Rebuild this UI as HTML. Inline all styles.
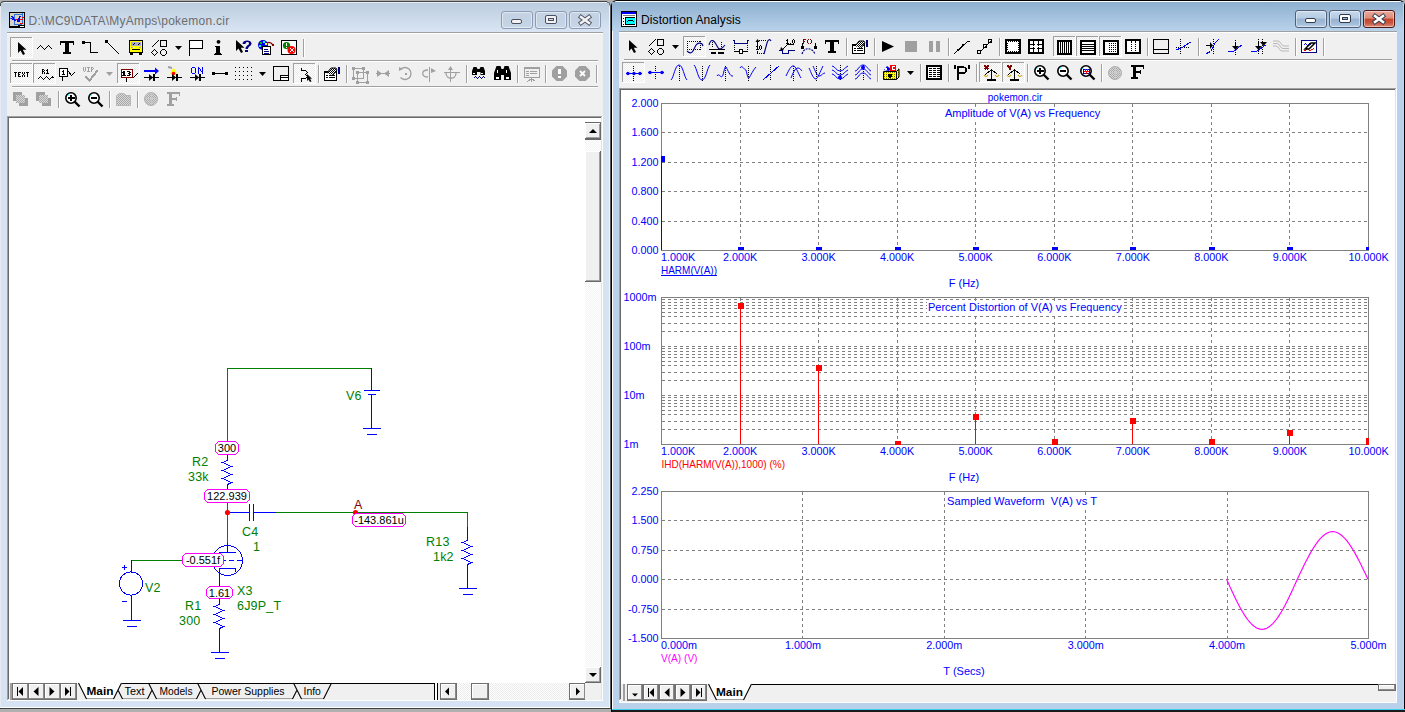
<!DOCTYPE html><html><head><meta charset="utf-8"><style>
html,body{margin:0;padding:0;}
body{width:1405px;height:712px;overflow:hidden;position:relative;background:#b0b0b0;font-family:"Liberation Sans",sans-serif;}
div{box-sizing:border-box;}
svg{position:absolute;overflow:visible;}
.t{position:absolute;white-space:pre;line-height:1;}
</style></head><body>

<div style="position:absolute;left:0px;top:1px;width:611px;height:708px;background:#d6e3f2;border-radius:5px 6px 0 0;"></div>
<div style="position:absolute;left:3px;top:1px;width:604px;height:1px;background:#474747;"></div>
<div style="position:absolute;left:0px;top:6px;width:1px;height:703px;background:#e8ecf2;"></div>
<svg style="left:0;top:0" width="8" height="8"><path d="M0.5 6 Q0.5 1.5 4 1.5" fill="none" stroke="#474747" stroke-width="1.2"/></svg>
<div style="position:absolute;left:605px;top:1px;width:6px;height:6px;background:transparent;border-top:1px solid #474747;border-right:1px solid #474747;border-radius:0 6px 0 0;box-sizing:border-box"></div>
<div style="position:absolute;left:4px;top:2px;width:603px;height:1px;background:#e6edf6;"></div>
<div style="position:absolute;left:1px;top:3px;width:608px;height:29px;background:linear-gradient(#bccddf,#d9e5f3);"></div>
<div style="position:absolute;left:609px;top:6px;width:1px;height:702px;background:#eef3fb;"></div>
<div style="position:absolute;left:610px;top:6px;width:1px;height:703px;background:#5a5a5a;"></div>
<div style="position:absolute;left:1px;top:707px;width:609px;height:1px;background:#fff;"></div>
<div style="position:absolute;left:0px;top:708px;width:611px;height:1px;background:#404040;"></div>
<div class="t" style="left:28.5px;top:14.5px;font-size:12px;color:#6d6d6d;letter-spacing:0.27px">D:\MC9\DATA\MyAmps\pokemon.cir</div>
<svg style="left:9px;top:12px" width="16" height="16" shape-rendering="crispEdges"><rect width="16" height="16" fill="#000"/><rect x="1" y="1" width="14" height="12" fill="#d8d2c0"/><rect x="1" y="13" width="8" height="1" fill="#d8d2c0"/><path d="M5.5 2 V12 M1 6.5 H5 M5 12.5 H13 M13.5 12 V1 M5.5 2.5 H13" stroke="#3070e0" stroke-width="1.2" fill="none"/><path d="M3 4 L6 9 M2 6 L4 8 M11 4 L9 10 M8 8 L11 9" stroke="#0000ff" stroke-width="1.4" fill="none"/><rect x="6" y="7" width="2" height="1" fill="#ff0000"/><rect x="13" y="5" width="2" height="1" fill="#ff0000"/><rect x="11" y="7" width="3" height="1" fill="#ff0000"/><rect x="11" y="11" width="3" height="1" fill="#ff0000"/><rect x="11" y="14" width="4" height="1" fill="#fff"/></svg>
<div style="position:absolute;left:501px;top:11px;width:32px;height:18px;border:1px solid #8b9ab7;border-radius:3px;background:linear-gradient(#c5d3e3 0%,#c3d2e3 50%,#c8d7e8 100%);box-shadow:inset 0 0 0 1px rgba(255,255,255,0.45)"></div><div style="position:absolute;left:511px;top:19px;width:11px;height:5px;background:#f2f2f2;border:1px solid #4a5060;border-radius:2px"></div>
<div style="position:absolute;left:535px;top:11px;width:32px;height:18px;border:1px solid #8b9ab7;border-radius:3px;background:linear-gradient(#c5d3e3 0%,#c3d2e3 50%,#c8d7e8 100%);box-shadow:inset 0 0 0 1px rgba(255,255,255,0.45)"></div><div style="position:absolute;left:545px;top:15px;width:12px;height:9px;background:#f2f2f2;border:1px solid #4a5060;border-radius:2px"><div style="position:absolute;left:2px;top:2px;width:6px;height:3px;border:1px solid #4a5060;background:#c8d6e6"></div></div>
<div style="position:absolute;left:569px;top:11px;width:32px;height:18px;border:1px solid #8b9ab7;border-radius:3px;background:linear-gradient(#c5d3e3 0%,#c3d2e3 50%,#c8d7e8 100%);box-shadow:inset 0 0 0 1px rgba(255,255,255,0.45)"></div><svg style="left:569px;top:11px" width="32" height="18"><path d="M12.0 6.0 L20.0 12.0 M20.0 6.0 L12.0 12.0" stroke="#4a5060" stroke-width="4.4" stroke-linecap="square"/><path d="M12.0 6.0 L20.0 12.0 M20.0 6.0 L12.0 12.0" stroke="#f2f2f2" stroke-width="2.6" stroke-linecap="square"/></svg>
<div style="position:absolute;left:7px;top:32px;width:596px;height:669px;background:#f0f0f0;"></div>
<div style="position:absolute;left:7px;top:32px;width:596px;height:1px;background:#a0a0a0;"></div>
<div style="position:absolute;left:7px;top:33px;width:596px;height:1px;background:#fff;"></div>
<div style="position:absolute;left:7px;top:700px;width:596px;height:1px;background:#fff;"></div>
<div style="position:absolute;left:12px;top:60px;width:586px;height:1px;background:#a0a0a0;"></div>
<div style="position:absolute;left:12px;top:61px;width:586px;height:1px;background:#fff;"></div>
<div style="position:absolute;left:12px;top:86px;width:586px;height:1px;background:#a0a0a0;"></div>
<div style="position:absolute;left:12px;top:87px;width:586px;height:1px;background:#fff;"></div>
<div style="position:absolute;left:7px;top:116px;width:596px;height:585px;background:#fff;"></div><div style="position:absolute;left:7px;top:116px;width:595px;height:1px;background:#a0a0a0;"></div><div style="position:absolute;left:7px;top:116px;width:1px;height:584px;background:#a0a0a0;"></div><div style="position:absolute;left:8px;top:117px;width:593px;height:1px;background:#696969;"></div><div style="position:absolute;left:8px;top:117px;width:1px;height:582px;background:#696969;"></div><div style="position:absolute;left:8px;top:699px;width:594px;height:1px;background:#e3e3e3;"></div><div style="position:absolute;left:601px;top:117px;width:1px;height:583px;background:#e3e3e3;"></div><div style="position:absolute;left:7px;top:700px;width:596px;height:1px;background:#fff;"></div><div style="position:absolute;left:602px;top:116px;width:1px;height:585px;background:#fff;"></div>
<div style="position:absolute;left:585px;top:122px;width:16px;height:561px;background-color:#f4f4f4;background-image:linear-gradient(45deg,#fff 25%,transparent 25%,transparent 75%,#fff 75%),linear-gradient(45deg,#fff 25%,transparent 25%,transparent 75%,#fff 75%);background-size:2px 2px;background-position:0 0,1px 1px"></div>
<div style="position:absolute;left:585px;top:122px;width:16px;height:1px;background:#696969;"></div>
<div style="position:absolute;left:585px;top:123px;width:16px;height:16px;background:#f0f0f0;"></div><div style="position:absolute;left:585px;top:123px;width:16px;height:1px;background:#fff;"></div><div style="position:absolute;left:585px;top:123px;width:1px;height:16px;background:#fff;"></div><div style="position:absolute;left:586px;top:137px;width:14px;height:1px;background:#a0a0a0;"></div><div style="position:absolute;left:599px;top:124px;width:1px;height:14px;background:#a0a0a0;"></div><div style="position:absolute;left:585px;top:138px;width:16px;height:1px;background:#696969;"></div><div style="position:absolute;left:600px;top:123px;width:1px;height:16px;background:#696969;"></div>
<svg style="left:585px;top:123px" width="16" height="16"><path d="M4 10 L12 10 L8 6 Z" fill="#000"/></svg>
<div style="position:absolute;left:585px;top:139px;width:16px;height:1px;background:#696969;"></div>
<div style="position:absolute;left:585px;top:151px;width:16px;height:131px;background:#f0f0f0;"></div><div style="position:absolute;left:585px;top:151px;width:16px;height:1px;background:#fff;"></div><div style="position:absolute;left:585px;top:151px;width:1px;height:131px;background:#fff;"></div><div style="position:absolute;left:586px;top:280px;width:14px;height:1px;background:#a0a0a0;"></div><div style="position:absolute;left:599px;top:152px;width:1px;height:129px;background:#a0a0a0;"></div><div style="position:absolute;left:585px;top:281px;width:16px;height:1px;background:#696969;"></div><div style="position:absolute;left:600px;top:151px;width:1px;height:131px;background:#696969;"></div>
<div style="position:absolute;left:585px;top:667px;width:16px;height:16px;background:#f0f0f0;"></div><div style="position:absolute;left:585px;top:667px;width:16px;height:1px;background:#fff;"></div><div style="position:absolute;left:585px;top:667px;width:1px;height:16px;background:#fff;"></div><div style="position:absolute;left:586px;top:681px;width:14px;height:1px;background:#a0a0a0;"></div><div style="position:absolute;left:599px;top:668px;width:1px;height:14px;background:#a0a0a0;"></div><div style="position:absolute;left:585px;top:682px;width:16px;height:1px;background:#696969;"></div><div style="position:absolute;left:600px;top:667px;width:1px;height:16px;background:#696969;"></div>
<svg style="left:585px;top:667px" width="16" height="16"><path d="M4 6 L12 6 L8 10 Z" fill="#000"/></svg>
<div style="position:absolute;left:611px;top:0px;width:794px;height:712px;background:#b9d1ea;border-radius:6px 6px 0 0;border:1px solid #000;border-bottom:none;box-shadow:inset 1px 1px 0 #fff, inset -1px 0 0 #d8e8f8"></div>
<div style="position:absolute;left:612px;top:2px;width:792px;height:29px;background:linear-gradient(#8eafcf,#b9d3eb);"></div>
<div style="position:absolute;left:1403px;top:4px;width:1px;height:705px;background:#a8e2f4;"></div>
<div style="position:absolute;left:612px;top:709px;width:793px;height:1px;background:#3cd0ec;"></div>
<div style="position:absolute;left:611px;top:710px;width:794px;height:2px;background:#1a1a1a;"></div>
<div style="position:absolute;left:611px;top:700px;width:1px;height:12px;background:#000;"></div>
<div class="t" style="left:641px;top:14.3px;font-size:12px;color:#000;letter-spacing:0.1px">Distortion Analysis</div>
<svg style="left:621px;top:11px" width="16" height="16" shape-rendering="crispEdges"><rect width="16" height="16" fill="#000"/><rect x="1" y="1" width="14" height="14" fill="#fff"/><rect x="1" y="1" width="14" height="2" fill="#0000ff"/><rect x="2" y="4" width="12" height="1" fill="#808080"/><rect x="4" y="6" width="10" height="8" fill="#000"/><rect x="5" y="7" width="9" height="6" fill="#00ffff"/><path d="M5.5 11.5 L8 9 H11 L13.5 11.5" stroke="#000" fill="none"/><rect x="2" y="7" width="1" height="1" fill="#000"/><rect x="2" y="10" width="1" height="1" fill="#000"/><rect x="2" y="13" width="1" height="1" fill="#000"/></svg>
<div style="position:absolute;left:1295px;top:10px;width:32px;height:18px;border:1px solid #4f5f78;border-radius:3px;background:linear-gradient(#c7d9ec 0%,#b4cbe3 45%,#98b3d1 50%,#a0bad6 75%,#b9d0e7 100%);box-shadow:inset 0 0 0 1px rgba(255,255,255,0.45)"></div><div style="position:absolute;left:1305px;top:18px;width:11px;height:5px;background:#fff;border:1px solid #2e3a4e;border-radius:2px"></div>
<div style="position:absolute;left:1329px;top:10px;width:32px;height:18px;border:1px solid #4f5f78;border-radius:3px;background:linear-gradient(#c7d9ec 0%,#b4cbe3 45%,#98b3d1 50%,#a0bad6 75%,#b9d0e7 100%);box-shadow:inset 0 0 0 1px rgba(255,255,255,0.45)"></div><div style="position:absolute;left:1339px;top:14px;width:12px;height:9px;background:#fff;border:1px solid #2e3a4e;border-radius:2px"><div style="position:absolute;left:2px;top:2px;width:6px;height:3px;border:1px solid #2e3a4e;background:#9ab4d0"></div></div>
<div style="position:absolute;left:1363px;top:10px;width:32px;height:18px;border:1px solid #4e1714;border-radius:3px;background:linear-gradient(#e9a99b 0%,#dd8b7a 45%,#c4452b 50%,#c8563f 75%,#dc8d7b 100%);box-shadow:inset 0 0 0 1px rgba(255,255,255,0.45)"></div><svg style="left:1363px;top:10px" width="32" height="18"><path d="M12.0 6.0 L20.0 12.0 M20.0 6.0 L12.0 12.0" stroke="#2e3a4e" stroke-width="4.4" stroke-linecap="square"/><path d="M12.0 6.0 L20.0 12.0 M20.0 6.0 L12.0 12.0" stroke="#fff" stroke-width="2.6" stroke-linecap="square"/></svg>
<div style="position:absolute;left:619px;top:31px;width:778px;height:672px;background:#f0f0f0;"></div>
<div style="position:absolute;left:619px;top:31px;width:778px;height:1px;background:#a0a0a0;"></div>
<div style="position:absolute;left:619px;top:32px;width:778px;height:1px;background:#fff;"></div>
<div style="position:absolute;left:619px;top:702px;width:778px;height:1px;background:#fff;"></div>
<div style="position:absolute;left:624px;top:59px;width:768px;height:1px;background:#a0a0a0;"></div>
<div style="position:absolute;left:624px;top:60px;width:768px;height:1px;background:#fff;"></div>
<div style="position:absolute;left:619px;top:88px;width:778px;height:613px;background:#fff;"></div><div style="position:absolute;left:619px;top:88px;width:777px;height:1px;background:#a0a0a0;"></div><div style="position:absolute;left:619px;top:88px;width:1px;height:612px;background:#a0a0a0;"></div><div style="position:absolute;left:620px;top:89px;width:775px;height:1px;background:#696969;"></div><div style="position:absolute;left:620px;top:89px;width:1px;height:610px;background:#696969;"></div><div style="position:absolute;left:620px;top:699px;width:776px;height:1px;background:#e3e3e3;"></div><div style="position:absolute;left:1395px;top:89px;width:1px;height:611px;background:#e3e3e3;"></div><div style="position:absolute;left:619px;top:700px;width:778px;height:1px;background:#fff;"></div><div style="position:absolute;left:1396px;top:88px;width:1px;height:613px;background:#fff;"></div>
<div style="position:absolute;left:621px;top:684px;width:775px;height:17px;background:#f0f0f0;"></div>
<svg style="left:0;top:0" width="1405" height="712" font-family="Liberation Sans, sans-serif">
<rect x="9" y="683" width="576" height="17" fill="#f0f0f0"/>
<rect x="12" y="683" width="17" height="17" fill="#f0f0f0" shape-rendering="crispEdges"/><rect x="12.5" y="683.5" width="16" height="16" fill="none" stroke="#707070" shape-rendering="crispEdges"/><path d="M13.5 698 V684.5 H27" stroke="#fff" fill="none" shape-rendering="crispEdges"/><path d="M13 698.5 H27.5 V684" stroke="#8a8a8a" fill="none" shape-rendering="crispEdges"/>
<rect x="17" y="687.0" width="1" height="9" fill="#000"/><path d="M23 687.0 V696.0 L18.5 691.5 Z" fill="#000"/>
<rect x="28" y="683" width="17" height="17" fill="#f0f0f0" shape-rendering="crispEdges"/><rect x="28.5" y="683.5" width="16" height="16" fill="none" stroke="#707070" shape-rendering="crispEdges"/><path d="M29.5 698 V684.5 H43" stroke="#fff" fill="none" shape-rendering="crispEdges"/><path d="M29 698.5 H43.5 V684" stroke="#8a8a8a" fill="none" shape-rendering="crispEdges"/>
<path d="M38.5 687.0 V696.0 L33.5 691.5 Z" fill="#000"/>
<rect x="44" y="683" width="17" height="17" fill="#f0f0f0" shape-rendering="crispEdges"/><rect x="44.5" y="683.5" width="16" height="16" fill="none" stroke="#707070" shape-rendering="crispEdges"/><path d="M45.5 698 V684.5 H59" stroke="#fff" fill="none" shape-rendering="crispEdges"/><path d="M45 698.5 H59.5 V684" stroke="#8a8a8a" fill="none" shape-rendering="crispEdges"/>
<path d="M49.5 687.0 V696.0 L54.5 691.5 Z" fill="#000"/>
<rect x="60" y="683" width="17" height="17" fill="#f0f0f0" shape-rendering="crispEdges"/><rect x="60.5" y="683.5" width="16" height="16" fill="none" stroke="#707070" shape-rendering="crispEdges"/><path d="M61.5 698 V684.5 H75" stroke="#fff" fill="none" shape-rendering="crispEdges"/><path d="M61 698.5 H75.5 V684" stroke="#8a8a8a" fill="none" shape-rendering="crispEdges"/>
<rect x="70" y="687.0" width="1" height="9" fill="#000"/><path d="M65 687.0 V696.0 L69.5 691.5 Z" fill="#000"/>
<rect x="10" y="683" width="2" height="17" fill="#a0a0a0"/>
<path d="M114 683 L122 699 H148 L156 683 Z" fill="#f0f0f0"/>
<rect x="122" y="698" width="26" height="1" fill="#a0a0a0" shape-rendering="crispEdges"/>
<path d="M114.5 683 L122.5 699 M147.5 699 L155.5 683" fill="none" stroke="#000" stroke-width="1.1"/>
<path d="M148 683 L156 699 H197 L205 683 Z" fill="#f0f0f0"/>
<rect x="156" y="698" width="41" height="1" fill="#a0a0a0" shape-rendering="crispEdges"/>
<path d="M148.5 683 L156.5 699 M196.5 699 L204.5 683" fill="none" stroke="#000" stroke-width="1.1"/>
<path d="M197 683 L205 699 H293 L301 683 Z" fill="#f0f0f0"/>
<rect x="205" y="698" width="88" height="1" fill="#a0a0a0" shape-rendering="crispEdges"/>
<path d="M197.5 683 L205.5 699 M292.5 699 L300.5 683" fill="none" stroke="#000" stroke-width="1.1"/>
<path d="M293 683 L301 699 H324 L332 683 Z" fill="#f0f0f0"/>
<rect x="301" y="698" width="23" height="1" fill="#a0a0a0" shape-rendering="crispEdges"/>
<path d="M293.5 683 L301.5 699 M323.5 699 L331.5 683" fill="none" stroke="#000" stroke-width="1.1"/>
<rect x="122" y="683" width="314" height="1" fill="#000" shape-rendering="crispEdges"/>
<path d="M78 683 L86 699 H114 L122 683 Z" fill="#fff"/>
<rect x="86" y="698" width="28" height="1" fill="#a0a0a0" shape-rendering="crispEdges"/>
<path d="M78.5 683 L86.5 699 M113.5 699 L121.5 683" fill="none" stroke="#000" stroke-width="1.1"/>
<text x="86.5" y="694.5" font-size="11.5" font-weight="bold" fill="#000" textLength="27" lengthAdjust="spacingAndGlyphs">Main</text>
<text x="124.5" y="694.5" font-size="11.5" fill="#000" textLength="20" lengthAdjust="spacingAndGlyphs">Text</text>
<text x="159.5" y="694.5" font-size="11.5" fill="#000" textLength="33" lengthAdjust="spacingAndGlyphs">Models</text>
<text x="211.5" y="694.5" font-size="11.5" fill="#000" textLength="73" lengthAdjust="spacingAndGlyphs">Power Supplies</text>
<text x="303.5" y="694.5" font-size="11.5" fill="#000" textLength="17.4" lengthAdjust="spacingAndGlyphs">Info</text>
<rect x="434" y="683" width="1" height="17" fill="#000"/><rect x="435" y="683" width="2" height="17" fill="#fff"/><rect x="437" y="683" width="1" height="17" fill="#000"/>
<rect x="440" y="683" width="145" height="17" fill="url(#chk)"/>
<rect x="440" y="683" width="17" height="17" fill="#f0f0f0" shape-rendering="crispEdges"/><rect x="440.5" y="683.5" width="16" height="16" fill="none" stroke="#707070" shape-rendering="crispEdges"/><path d="M441.5 698 V684.5 H455" stroke="#fff" fill="none" shape-rendering="crispEdges"/><path d="M441 698.5 H455.5 V684" stroke="#8a8a8a" fill="none" shape-rendering="crispEdges"/>
<path d="M449 687.5 V695.5 L445 691.5 Z" fill="#000"/>
<rect x="471" y="683" width="18" height="17" fill="#f0f0f0" shape-rendering="crispEdges"/><rect x="471.5" y="683.5" width="17" height="16" fill="none" stroke="#707070" shape-rendering="crispEdges"/><path d="M472.5 698 V684.5 H487" stroke="#fff" fill="none" shape-rendering="crispEdges"/><path d="M472 698.5 H487.5 V684" stroke="#8a8a8a" fill="none" shape-rendering="crispEdges"/>
<rect x="569" y="683" width="17" height="17" fill="#f0f0f0" shape-rendering="crispEdges"/><rect x="569.5" y="683.5" width="16" height="16" fill="none" stroke="#707070" shape-rendering="crispEdges"/><path d="M570.5 698 V684.5 H584" stroke="#fff" fill="none" shape-rendering="crispEdges"/><path d="M570 698.5 H584.5 V684" stroke="#8a8a8a" fill="none" shape-rendering="crispEdges"/>
<path d="M576 687.5 V695.5 L580 691.5 Z" fill="#000"/>
<rect x="585" y="683" width="16" height="17" fill="#f0f0f0"/>
<rect x="621" y="684" width="775" height="17" fill="#f0f0f0"/>
<rect x="623" y="684" width="2" height="17" fill="#a0a0a0"/>
<rect x="627" y="684" width="16" height="17" fill="#f0f0f0" shape-rendering="crispEdges"/><rect x="627.5" y="684.5" width="15" height="16" fill="none" stroke="#707070" shape-rendering="crispEdges"/><path d="M628.5 699 V685.5 H641" stroke="#fff" fill="none" shape-rendering="crispEdges"/><path d="M628 699.5 H641.5 V685" stroke="#8a8a8a" fill="none" shape-rendering="crispEdges"/>
<path d="M632 693.5 H638 L635 696.5 Z" fill="#000"/>
<rect x="643" y="684" width="16" height="17" fill="#f0f0f0" shape-rendering="crispEdges"/><rect x="643.5" y="684.5" width="15" height="16" fill="none" stroke="#707070" shape-rendering="crispEdges"/><path d="M644.5 699 V685.5 H657" stroke="#fff" fill="none" shape-rendering="crispEdges"/><path d="M644 699.5 H657.5 V685" stroke="#8a8a8a" fill="none" shape-rendering="crispEdges"/>
<rect x="648" y="688.0" width="1" height="9" fill="#000"/><path d="M654 688.0 V697.0 L649.5 692.5 Z" fill="#000"/>
<rect x="659" y="684" width="16" height="17" fill="#f0f0f0" shape-rendering="crispEdges"/><rect x="659.5" y="684.5" width="15" height="16" fill="none" stroke="#707070" shape-rendering="crispEdges"/><path d="M660.5 699 V685.5 H673" stroke="#fff" fill="none" shape-rendering="crispEdges"/><path d="M660 699.5 H673.5 V685" stroke="#8a8a8a" fill="none" shape-rendering="crispEdges"/>
<path d="M669.5 688.0 V697.0 L664.5 692.5 Z" fill="#000"/>
<rect x="675" y="684" width="16" height="17" fill="#f0f0f0" shape-rendering="crispEdges"/><rect x="675.5" y="684.5" width="15" height="16" fill="none" stroke="#707070" shape-rendering="crispEdges"/><path d="M676.5 699 V685.5 H689" stroke="#fff" fill="none" shape-rendering="crispEdges"/><path d="M676 699.5 H689.5 V685" stroke="#8a8a8a" fill="none" shape-rendering="crispEdges"/>
<path d="M680.5 688.0 V697.0 L685.5 692.5 Z" fill="#000"/>
<rect x="691" y="684" width="16" height="17" fill="#f0f0f0" shape-rendering="crispEdges"/><rect x="691.5" y="684.5" width="15" height="16" fill="none" stroke="#707070" shape-rendering="crispEdges"/><path d="M692.5 699 V685.5 H705" stroke="#fff" fill="none" shape-rendering="crispEdges"/><path d="M692 699.5 H705.5 V685" stroke="#8a8a8a" fill="none" shape-rendering="crispEdges"/>
<rect x="701" y="688.0" width="1" height="9" fill="#000"/><path d="M696 688.0 V697.0 L700.5 692.5 Z" fill="#000"/>
<rect x="751" y="684" width="627" height="1" fill="#000" shape-rendering="crispEdges"/>
<path d="M708 684 L716 700 H744 L752 684 Z" fill="#fff"/><rect x="716" y="699" width="28" height="1" fill="#a0a0a0"/><path d="M708.5 684 L716.5 700 M743.5 700 L751.5 684" fill="none" stroke="#000" stroke-width="1.1"/>
<text x="716" y="695.5" font-size="11.5" font-weight="bold" fill="#000" textLength="27" lengthAdjust="spacingAndGlyphs">Main</text>
<rect x="1378" y="684" width="18" height="7" fill="#f0f0f0" shape-rendering="crispEdges"/><rect x="1378.5" y="684.5" width="17" height="6" fill="none" stroke="#707070" shape-rendering="crispEdges"/><path d="M1379.5 689 V685.5 H1394" stroke="#fff" fill="none" shape-rendering="crispEdges"/><path d="M1379 689.5 H1394.5 V685" stroke="#8a8a8a" fill="none" shape-rendering="crispEdges"/>
</svg>
<svg style="left:0;top:0" width="1405" height="712" shape-rendering="crispEdges">
<defs><pattern id="chk" width="2" height="2" patternUnits="userSpaceOnUse"><rect width="2" height="2" fill="#ffffff"/><rect width="1" height="1" fill="#ebebeb"/><rect x="1" y="1" width="1" height="1" fill="#ebebeb"/></pattern><pattern id="chkg" width="2" height="2" patternUnits="userSpaceOnUse"><rect width="2" height="2" fill="#d8d8d8"/><rect width="1" height="1" fill="#a8a8a8"/><rect x="1" y="1" width="1" height="1" fill="#a8a8a8"/></pattern><pattern id="chkk" width="2" height="2" patternUnits="userSpaceOnUse"><rect width="2" height="2" fill="#fff"/><rect width="1" height="1" fill="#000"/><rect x="1" y="1" width="1" height="1" fill="#000"/></pattern></defs>
<rect x="10" y="37" width="23" height="21" fill="url(#chk)"/><rect x="10" y="37" width="23" height="1" fill="#a0a0a0"/><rect x="10" y="37" width="1" height="21" fill="#a0a0a0"/><rect x="10" y="57" width="23" height="1" fill="#fff"/><rect x="32" y="37" width="1" height="21" fill="#fff"/>
<path d="M18 42 V53 L20.5 50.5 L23 55 L25 54 L22.8 49.8 L26.5 49.8 Z" fill="#000" shape-rendering="auto"/>
<polyline points="36.5,49.5 40.5,45.5 44.5,49.5 48.5,45.5 52.5,49.5" fill="none" stroke="#000" stroke-width="1" />
<path d="M60 41 H74 V45 H73 V43 H69 V52 H71 V54 H63 V52 H65 V43 H61 V45 H60 Z" fill="#000" />
<rect x="82" y="41" width="3" height="3" fill="#000"/><polyline points="84.5,42.5 90.5,42.5 90.5,52.5 97.5,52.5" fill="none" stroke="#000" stroke-width="1" />
<rect x="105" y="40" width="3" height="3" fill="#000"/><polyline points="107.5,42.5 119.5,54.5" fill="none" stroke="#000" stroke-width="1" />
<rect x="129" y="40" width="14" height="13" fill="#000"/><rect x="130" y="41" width="12" height="11" fill="#ffff00"/><rect x="131" y="42" width="10" height="4" fill="#a8a8d0"/><polyline points="132.5,45.5 134.5,43.5 135.5,44.5" fill="none" stroke="#000" stroke-width="1" /><polyline points="137.5,45.5 139.5,43.5 140.5,44.5" fill="none" stroke="#000" stroke-width="1" /><rect x="131" y="47" width="2" height="1" fill="#a8a8d0"/><rect x="139" y="47" width="2" height="1" fill="#a8a8d0"/><rect x="132" y="49" width="8" height="1" fill="#000"/><rect x="130" y="53" width="3" height="2" fill="#000"/><rect x="139" y="53" width="3" height="2" fill="#000"/>
<polyline points="151.5,47.5 158.5,40.5" fill="none" stroke="#000" stroke-width="1" /><path d="M160.5 40.5 h6 v6 h-6 Z" fill="none" stroke="#000" stroke-width="1" /><rect x="151" y="52" width="1" height="1" fill="#000"/><rect x="152" y="51" width="1" height="1" fill="#000"/><rect x="153" y="50" width="1" height="1" fill="#000"/><rect x="154" y="49" width="1" height="1" fill="#000"/><rect x="155" y="50" width="1" height="1" fill="#000"/><rect x="156" y="51" width="1" height="1" fill="#000"/><rect x="157" y="52" width="1" height="1" fill="#000"/><rect x="156" y="53" width="1" height="1" fill="#000"/><rect x="155" y="54" width="1" height="1" fill="#000"/><rect x="154" y="55" width="1" height="1" fill="#000"/><rect x="153" y="54" width="1" height="1" fill="#000"/><rect x="152" y="53" width="1" height="1" fill="#000"/><rect x="162" y="49" width="1" height="1" fill="#000"/><rect x="163" y="49" width="1" height="1" fill="#000"/><rect x="164" y="49" width="1" height="1" fill="#000"/><rect x="161" y="50" width="1" height="1" fill="#000"/><rect x="165" y="50" width="1" height="1" fill="#000"/><rect x="160" y="51" width="1" height="1" fill="#000"/><rect x="166" y="51" width="1" height="1" fill="#000"/><rect x="160" y="52" width="1" height="1" fill="#000"/><rect x="166" y="52" width="1" height="1" fill="#000"/><rect x="160" y="53" width="1" height="1" fill="#000"/><rect x="166" y="53" width="1" height="1" fill="#000"/><rect x="161" y="54" width="1" height="1" fill="#000"/><rect x="165" y="54" width="1" height="1" fill="#000"/><rect x="162" y="55" width="1" height="1" fill="#000"/><rect x="163" y="55" width="1" height="1" fill="#000"/><rect x="164" y="55" width="1" height="1" fill="#000"/>
<path d="M175 46 H182 L178.5 50 Z" fill="#000" shape-rendering="auto"/>
<rect x="189" y="40" width="14" height="9" fill="#000"/><rect x="190" y="41" width="12" height="7" fill="#fff"/><rect x="189" y="40" width="1" height="16" fill="#000"/>
<circle cx="218.5" cy="41.8" r="1.9" fill="#000" shape-rendering="auto"/><path d="M215 46 H220 V53 L222 54 V55 H214 V54 L216 53 V47 H215 Z" fill="#000" />
<path d="M236 40 V51 L238.5 48.5 L241 53 L243 52 L240.8 47.8 L244.5 47.8 Z" fill="#000" shape-rendering="auto"/><path d="M242.5 44 C242.5 39.5 251.5 39.5 251.5 43.5 C251.5 46 248 46.5 248 49 H245.5 C245.5 45.5 249 45.3 249 43.5 C249 41.5 245.5 41.5 245.5 44 Z" fill="#000080" shape-rendering="auto"/><rect x="245" y="50" width="3" height="2" fill="#000080"/>
<circle cx="263" cy="45" r="5" fill="#0000e0" shape-rendering="auto"/><rect x="260" y="42" width="2" height="2" fill="#00c000"/><rect x="263" y="41" width="2" height="2" fill="#00ffff"/><rect x="265" y="43" width="2" height="2" fill="#ffff00"/><rect x="259" y="45" width="2" height="2" fill="#00ffff"/><path d="M267 43 Q270 41 273 45" fill="none" stroke="#800000" stroke-width="1.3" shape-rendering="auto"/><rect x="272" y="44" width="2" height="2" fill="#800000"/><rect x="262" y="46" width="9" height="9" fill="#000"/><rect x="263" y="47" width="7" height="7" fill="#fff"/><rect x="264" y="49" width="4" height="1" fill="#000080"/><rect x="264" y="51" width="5" height="1" fill="#000080"/><rect x="264" y="53" width="5" height="1" fill="#000080"/>
<rect x="281" y="40" width="16" height="15" fill="#000"/><rect x="282" y="41" width="14" height="13" fill="#fff"/><circle cx="286.5" cy="45.5" r="3.6" fill="#008000" shape-rendering="auto"/><rect x="286" y="43" width="1" height="3" fill="#fff"/><rect x="286" y="47" width="1" height="1" fill="#fff"/><circle cx="291.5" cy="50" r="4" fill="#ff0000" shape-rendering="auto"/><rect x="290" y="48" width="1" height="1" fill="#fff"/><rect x="293" y="48" width="1" height="1" fill="#fff"/><rect x="291" y="49" width="2" height="2" fill="#fff"/><rect x="290" y="51" width="1" height="1" fill="#fff"/><rect x="293" y="51" width="1" height="1" fill="#fff"/>
<rect x="303" y="39" width="1" height="18" fill="#a0a0a0"/><rect x="304" y="39" width="1" height="18" fill="#fff"/>
<rect x="10" y="63" width="23" height="21" fill="url(#chk)"/><rect x="10" y="63" width="23" height="1" fill="#a0a0a0"/><rect x="10" y="63" width="1" height="21" fill="#a0a0a0"/><rect x="10" y="83" width="23" height="1" fill="#fff"/><rect x="32" y="63" width="1" height="21" fill="#fff"/>
<rect x="33" y="63" width="23" height="21" fill="url(#chk)"/><rect x="33" y="63" width="23" height="1" fill="#a0a0a0"/><rect x="33" y="63" width="1" height="21" fill="#a0a0a0"/><rect x="33" y="83" width="23" height="1" fill="#fff"/><rect x="55" y="63" width="1" height="21" fill="#fff"/>
<rect x="14" y="72" width="1" height="1" fill="#000"/><rect x="15" y="72" width="1" height="1" fill="#000"/><rect x="16" y="72" width="1" height="1" fill="#000"/><rect x="15" y="73" width="1" height="1" fill="#000"/><rect x="15" y="74" width="1" height="1" fill="#000"/><rect x="15" y="75" width="1" height="1" fill="#000"/><rect x="15" y="76" width="1" height="1" fill="#000"/><rect x="18" y="72" width="1" height="1" fill="#000"/><rect x="19" y="72" width="1" height="1" fill="#000"/><rect x="20" y="72" width="1" height="1" fill="#000"/><rect x="18" y="73" width="1" height="1" fill="#000"/><rect x="18" y="74" width="1" height="1" fill="#000"/><rect x="19" y="74" width="1" height="1" fill="#000"/><rect x="18" y="75" width="1" height="1" fill="#000"/><rect x="18" y="76" width="1" height="1" fill="#000"/><rect x="19" y="76" width="1" height="1" fill="#000"/><rect x="20" y="76" width="1" height="1" fill="#000"/><rect x="22" y="72" width="1" height="1" fill="#000"/><rect x="24" y="72" width="1" height="1" fill="#000"/><rect x="22" y="73" width="1" height="1" fill="#000"/><rect x="24" y="73" width="1" height="1" fill="#000"/><rect x="23" y="74" width="1" height="1" fill="#000"/><rect x="22" y="75" width="1" height="1" fill="#000"/><rect x="24" y="75" width="1" height="1" fill="#000"/><rect x="22" y="76" width="1" height="1" fill="#000"/><rect x="24" y="76" width="1" height="1" fill="#000"/><rect x="26" y="72" width="1" height="1" fill="#000"/><rect x="27" y="72" width="1" height="1" fill="#000"/><rect x="28" y="72" width="1" height="1" fill="#000"/><rect x="27" y="73" width="1" height="1" fill="#000"/><rect x="27" y="74" width="1" height="1" fill="#000"/><rect x="27" y="75" width="1" height="1" fill="#000"/><rect x="27" y="76" width="1" height="1" fill="#000"/>
<rect x="42" y="69" width="1" height="1" fill="#000"/><rect x="43" y="69" width="1" height="1" fill="#000"/><rect x="42" y="70" width="1" height="1" fill="#000"/><rect x="44" y="70" width="1" height="1" fill="#000"/><rect x="42" y="71" width="1" height="1" fill="#000"/><rect x="43" y="71" width="1" height="1" fill="#000"/><rect x="42" y="72" width="1" height="1" fill="#000"/><rect x="44" y="72" width="1" height="1" fill="#000"/><rect x="42" y="73" width="1" height="1" fill="#000"/><rect x="44" y="73" width="1" height="1" fill="#000"/><rect x="47" y="69" width="1" height="1" fill="#000"/><rect x="46" y="70" width="1" height="1" fill="#000"/><rect x="47" y="70" width="1" height="1" fill="#000"/><rect x="47" y="71" width="1" height="1" fill="#000"/><rect x="47" y="72" width="1" height="1" fill="#000"/><rect x="46" y="73" width="1" height="1" fill="#000"/><rect x="47" y="73" width="1" height="1" fill="#000"/><rect x="48" y="73" width="1" height="1" fill="#000"/><polyline points="37.5,79.5 40.5,76.5 43.5,79.5 46.5,76.5 49.5,79.5 52.5,76.5 53.5,78.5" fill="none" stroke="#000" stroke-width="1" />
<rect x="59" y="68" width="9" height="9" fill="#000"/><rect x="60" y="69" width="7" height="7" fill="#fff"/><rect x="63" y="70" width="1" height="1" fill="#000"/><rect x="62" y="71" width="1" height="1" fill="#000"/><rect x="63" y="71" width="1" height="1" fill="#000"/><rect x="63" y="72" width="1" height="1" fill="#000"/><rect x="63" y="73" width="1" height="1" fill="#000"/><rect x="62" y="74" width="1" height="1" fill="#000"/><rect x="63" y="74" width="1" height="1" fill="#000"/><rect x="64" y="74" width="1" height="1" fill="#000"/><rect x="62" y="77" width="1" height="4" fill="#000"/><polyline points="68.5,71.5 71.5,75.5 74.5,72.5" fill="none" stroke="#000" stroke-width="1" />
<rect x="83" y="67" width="1" height="1" fill="#a0a0a0"/><rect x="85" y="67" width="1" height="1" fill="#a0a0a0"/><rect x="83" y="68" width="1" height="1" fill="#a0a0a0"/><rect x="85" y="68" width="1" height="1" fill="#a0a0a0"/><rect x="83" y="69" width="1" height="1" fill="#a0a0a0"/><rect x="85" y="69" width="1" height="1" fill="#a0a0a0"/><rect x="83" y="70" width="1" height="1" fill="#a0a0a0"/><rect x="85" y="70" width="1" height="1" fill="#a0a0a0"/><rect x="84" y="71" width="1" height="1" fill="#a0a0a0"/><rect x="87" y="67" width="1" height="1" fill="#a0a0a0"/><rect x="88" y="67" width="1" height="1" fill="#a0a0a0"/><rect x="89" y="67" width="1" height="1" fill="#a0a0a0"/><rect x="88" y="68" width="1" height="1" fill="#a0a0a0"/><rect x="88" y="69" width="1" height="1" fill="#a0a0a0"/><rect x="88" y="70" width="1" height="1" fill="#a0a0a0"/><rect x="87" y="71" width="1" height="1" fill="#a0a0a0"/><rect x="88" y="71" width="1" height="1" fill="#a0a0a0"/><rect x="89" y="71" width="1" height="1" fill="#a0a0a0"/><rect x="91" y="67" width="1" height="1" fill="#a0a0a0"/><rect x="92" y="67" width="1" height="1" fill="#a0a0a0"/><rect x="91" y="68" width="1" height="1" fill="#a0a0a0"/><rect x="93" y="68" width="1" height="1" fill="#a0a0a0"/><rect x="91" y="69" width="1" height="1" fill="#a0a0a0"/><rect x="92" y="69" width="1" height="1" fill="#a0a0a0"/><rect x="91" y="70" width="1" height="1" fill="#a0a0a0"/><rect x="91" y="71" width="1" height="1" fill="#a0a0a0"/><polyline points="85.5,76.5 89.5,80.5 97.5,70.5" fill="none" stroke="#a0a0a0" stroke-width="2" />
<path d="M106 72 H113 L109.5 76 Z" fill="#a0a0a0" shape-rendering="auto"/>
<rect x="117" y="63" width="23" height="21" fill="url(#chk)"/><rect x="117" y="63" width="23" height="1" fill="#a0a0a0"/><rect x="117" y="63" width="1" height="21" fill="#a0a0a0"/><rect x="117" y="83" width="23" height="1" fill="#fff"/><rect x="139" y="63" width="1" height="21" fill="#fff"/>
<rect x="121" y="69" width="12" height="9" fill="#800000"/><rect x="122" y="70" width="10" height="7" fill="#fff"/><rect x="123" y="71" width="2" height="1" fill="#000"/><rect x="122" y="72" width="2" height="1" fill="#000"/><rect x="123" y="72" width="2" height="1" fill="#000"/><rect x="123" y="73" width="2" height="1" fill="#000"/><rect x="123" y="74" width="2" height="1" fill="#000"/><rect x="122" y="75" width="2" height="1" fill="#000"/><rect x="123" y="75" width="2" height="1" fill="#000"/><rect x="124" y="75" width="2" height="1" fill="#000"/><rect x="127" y="71" width="2" height="1" fill="#000"/><rect x="128" y="71" width="2" height="1" fill="#000"/><rect x="129" y="72" width="2" height="1" fill="#000"/><rect x="128" y="73" width="2" height="1" fill="#000"/><rect x="129" y="74" width="2" height="1" fill="#000"/><rect x="127" y="75" width="2" height="1" fill="#000"/><rect x="128" y="75" width="2" height="1" fill="#000"/><rect x="126" y="78" width="1" height="4" fill="#000"/><polyline points="132.5,78.5 137.5,73.5" fill="none" stroke="#000" stroke-width="1" />
<rect x="144" y="70" width="12" height="2" fill="#0000ff"/><path d="M155 67.5 L159 71 L155 74.5 Z" fill="#0000ff" shape-rendering="auto"/><rect x="144" y="77" width="15" height="1" fill="#000"/><path d="M149 74 L153 77.5 L149 81 Z" fill="#000" shape-rendering="auto"/><rect x="153" y="74" width="2" height="7" fill="#000"/>
<path d="M168 67 L172 68" fill="none" stroke="#a0a0a0" stroke-width="2" shape-rendering="auto"/><path d="M173.5 68 C176 70 176.5 72 176.5 73.5 C176.5 76 170.5 76 170.5 73.5 C170.5 71.5 172 70 173.5 68 Z" fill="#ffff00" shape-rendering="auto"/><circle cx="173.5" cy="73.5" r="1.8" fill="#ff0000" shape-rendering="auto"/><rect x="167" y="77" width="15" height="1" fill="#000"/><path d="M172 74 L176 77.5 L172 81 Z" fill="#000" shape-rendering="auto"/><rect x="176" y="74" width="2" height="7" fill="#000"/>
<rect x="192" y="67" width="1" height="1" fill="#0000ff"/><rect x="193" y="67" width="1" height="1" fill="#0000ff"/><rect x="194" y="67" width="1" height="1" fill="#0000ff"/><rect x="191" y="68" width="1" height="1" fill="#0000ff"/><rect x="195" y="68" width="1" height="1" fill="#0000ff"/><rect x="191" y="69" width="1" height="1" fill="#0000ff"/><rect x="195" y="69" width="1" height="1" fill="#0000ff"/><rect x="191" y="70" width="1" height="1" fill="#0000ff"/><rect x="195" y="70" width="1" height="1" fill="#0000ff"/><rect x="191" y="71" width="1" height="1" fill="#0000ff"/><rect x="195" y="71" width="1" height="1" fill="#0000ff"/><rect x="191" y="72" width="1" height="1" fill="#0000ff"/><rect x="195" y="72" width="1" height="1" fill="#0000ff"/><rect x="192" y="73" width="1" height="1" fill="#0000ff"/><rect x="193" y="73" width="1" height="1" fill="#0000ff"/><rect x="194" y="73" width="1" height="1" fill="#0000ff"/><rect x="198" y="67" width="1" height="1" fill="#0000ff"/><rect x="202" y="67" width="1" height="1" fill="#0000ff"/><rect x="198" y="68" width="1" height="1" fill="#0000ff"/><rect x="199" y="68" width="1" height="1" fill="#0000ff"/><rect x="202" y="68" width="1" height="1" fill="#0000ff"/><rect x="198" y="69" width="1" height="1" fill="#0000ff"/><rect x="200" y="69" width="1" height="1" fill="#0000ff"/><rect x="202" y="69" width="1" height="1" fill="#0000ff"/><rect x="198" y="70" width="1" height="1" fill="#0000ff"/><rect x="200" y="70" width="1" height="1" fill="#0000ff"/><rect x="202" y="70" width="1" height="1" fill="#0000ff"/><rect x="198" y="71" width="1" height="1" fill="#0000ff"/><rect x="201" y="71" width="1" height="1" fill="#0000ff"/><rect x="202" y="71" width="1" height="1" fill="#0000ff"/><rect x="198" y="72" width="1" height="1" fill="#0000ff"/><rect x="202" y="72" width="1" height="1" fill="#0000ff"/><rect x="198" y="73" width="1" height="1" fill="#0000ff"/><rect x="202" y="73" width="1" height="1" fill="#0000ff"/><rect x="190" y="77" width="15" height="1" fill="#000"/><path d="M195 74 L199 77.5 L195 81 Z" fill="#000" shape-rendering="auto"/><rect x="199" y="74" width="2" height="7" fill="#000"/>
<rect x="212" y="72" width="3" height="3" fill="#000"/><rect x="225" y="72" width="3" height="3" fill="#000"/><rect x="214" y="73" width="12" height="1" fill="#000"/>
<rect x="235" y="67" width="1" height="1" fill="#000"/>
<rect x="235" y="71" width="1" height="1" fill="#000"/>
<rect x="235" y="75" width="1" height="1" fill="#000"/>
<rect x="235" y="79" width="1" height="1" fill="#000"/>
<rect x="239" y="67" width="1" height="1" fill="#000"/>
<rect x="239" y="71" width="1" height="1" fill="#000"/>
<rect x="239" y="75" width="1" height="1" fill="#000"/>
<rect x="239" y="79" width="1" height="1" fill="#000"/>
<rect x="243" y="67" width="1" height="1" fill="#000"/>
<rect x="243" y="71" width="1" height="1" fill="#000"/>
<rect x="243" y="75" width="1" height="1" fill="#000"/>
<rect x="243" y="79" width="1" height="1" fill="#000"/>
<rect x="247" y="67" width="1" height="1" fill="#000"/>
<rect x="247" y="71" width="1" height="1" fill="#000"/>
<rect x="247" y="75" width="1" height="1" fill="#000"/>
<rect x="247" y="79" width="1" height="1" fill="#000"/>
<rect x="251" y="67" width="1" height="1" fill="#000"/>
<rect x="251" y="71" width="1" height="1" fill="#000"/>
<rect x="251" y="75" width="1" height="1" fill="#000"/>
<rect x="251" y="79" width="1" height="1" fill="#000"/>
<path d="M259 72 H266 L262.5 76 Z" fill="#000" shape-rendering="auto"/>
<rect x="273" y="66" width="16" height="15" fill="#000"/><rect x="274" y="67" width="14" height="13" fill="#f0f0f0"/><rect x="280" y="75" width="9" height="6" fill="#000"/><rect x="281" y="76" width="7" height="1" fill="#fff"/><rect x="281" y="78" width="7" height="2" fill="#fff"/>
<rect x="293" y="63" width="23" height="21" fill="url(#chk)"/><rect x="293" y="63" width="23" height="1" fill="#a0a0a0"/><rect x="293" y="63" width="1" height="21" fill="#a0a0a0"/><rect x="293" y="83" width="23" height="1" fill="#fff"/><rect x="315" y="63" width="1" height="21" fill="#fff"/>
<polyline points="301.5,67.5 301.5,70.5 305.5,70.5 307.5,72.5 305.5,74.5 307.5,76.5" fill="none" stroke="#000" stroke-width="1" /><polyline points="301.5,81.5 301.5,78.5 305.5,78.5 306.5,77.5" fill="none" stroke="#000" stroke-width="1" /><path d="M307 74 V81 L308.5 79.5 L310 82 L311.5 81.3 L310 78.8 L312 78.8 Z" fill="#000" shape-rendering="auto"/>
<rect x="318" y="65" width="1" height="18" fill="#a0a0a0"/><rect x="319" y="65" width="1" height="18" fill="#fff"/>
<rect x="324" y="71" width="13" height="10" fill="#fff"/><path d="M324.5 71.5 h12 v9 h-12 Z" fill="none" stroke="#000" stroke-width="1" /><rect x="324" y="71" width="13" height="2" fill="#000"/><rect x="326" y="75" width="2" height="1" fill="#000"/><rect x="329" y="75" width="6" height="1" fill="#000"/><rect x="326" y="77" width="2" height="1" fill="#000"/><rect x="329" y="77" width="6" height="1" fill="#000"/><path d="M327 73 L331 68 H336 L336 72 L332 75 Z" fill="url(#chkk)" shape-rendering="auto"/><path d="M327 73 L331 68 H336 L337 70 L333 75" fill="none" stroke="#000" stroke-width="1" shape-rendering="auto"/><rect x="338" y="67" width="2" height="7" fill="#000080"/>
<rect x="346" y="65" width="1" height="18" fill="#a0a0a0"/><rect x="347" y="65" width="1" height="18" fill="#fff"/>
<path d="M353.5 68.5 h10 v10 h-10 Z M357.5 72.5 h10 v10 h-10 Z" fill="none" stroke="#a0a0a0" stroke-width="1" /><rect x="352" y="67" width="3" height="3" fill="#a0a0a0"/><rect x="362" y="67" width="3" height="3" fill="#a0a0a0"/><rect x="352" y="77" width="3" height="3" fill="#a0a0a0"/><rect x="356" y="71" width="3" height="3" fill="#a0a0a0"/><rect x="366" y="71" width="3" height="3" fill="#a0a0a0"/><rect x="356" y="81" width="3" height="3" fill="#a0a0a0"/><rect x="366" y="81" width="3" height="3" fill="#a0a0a0"/>
<rect x="376" y="73" width="14" height="1" fill="#a0a0a0"/><path d="M377 70 L382 73.5 L377 77 Z" fill="#a0a0a0" shape-rendering="auto"/><path d="M389 70 L384 73.5 L389 77 Z" fill="#a0a0a0" shape-rendering="auto"/>
<path d="M401 69 A6 6 0 1 1 400.5 77.5" fill="none" stroke="#a0a0a0" stroke-width="1.3" shape-rendering="auto"/><rect x="405" y="73" width="2" height="2" fill="#a0a0a0"/><path d="M399 67 L403 69 L399 71 Z" fill="#a0a0a0" shape-rendering="auto"/>
<rect x="429" y="67" width="1" height="15" fill="#a0a0a0"/><path d="M428 70 C421 70 421 77 428 77" fill="none" stroke="#a0a0a0" stroke-width="1.3" shape-rendering="auto"/><path d="M431 68 L436 71 L431 73 Z" fill="#a0a0a0" shape-rendering="auto"/>
<rect x="444" y="72" width="16" height="1" fill="#a0a0a0"/><rect x="450" y="68" width="1" height="14" fill="#a0a0a0"/><path d="M446 73 C446 80 456 80 456 73" fill="none" stroke="#a0a0a0" stroke-width="1.3" shape-rendering="auto"/><path d="M448 70 L450.5 66 L453 70 Z" fill="#a0a0a0" shape-rendering="auto"/>
<rect x="466" y="65" width="1" height="18" fill="#a0a0a0"/><rect x="467" y="65" width="1" height="18" fill="#fff"/>
<path d="M472 75 V71 L473.5 67 H476.5 L477.5 69 H479.5 L480.5 67 H483.5 L485 71 V75 H480.5 V72 H477 V75 Z" fill="#000" shape-rendering="auto"/><rect x="473" y="73" width="2" height="1" fill="#fff"/><rect x="481" y="73" width="2" height="1" fill="#fff"/><polyline points="473.5,78.5 475.5,76.5 477.5,78.5 479.5,76.5 481.5,78.5 483.5,76.5 485.5,78.5" fill="none" stroke="#000080" stroke-width="1" />
<path d="M494 80 V73 L496.5 66 H500.5 L501.5 69 H503.5 L504.5 66 H508.5 L511 73 V80 H504 V75 H501 V80 Z" fill="#000" shape-rendering="auto"/><rect x="496" y="77" width="3" height="2" fill="#fff"/><rect x="506" y="77" width="3" height="2" fill="#fff"/><rect x="497" y="70" width="1" height="3" fill="#fff"/><rect x="506" y="70" width="1" height="3" fill="#fff"/>
<rect x="517" y="65" width="1" height="18" fill="#a0a0a0"/><rect x="518" y="65" width="1" height="18" fill="#fff"/>
<path d="M524.5 67.5 h15 v10 h-15 Z" fill="none" stroke="#a0a0a0" stroke-width="1" /><rect x="524" y="67" width="16" height="2" fill="#a0a0a0"/><rect x="526" y="71" width="3" height="1" fill="#a0a0a0"/><rect x="530" y="71" width="7" height="1" fill="#a0a0a0"/><rect x="526" y="73" width="3" height="1" fill="#a0a0a0"/><rect x="530" y="73" width="7" height="1" fill="#a0a0a0"/><rect x="526" y="75" width="3" height="1" fill="#a0a0a0"/><rect x="531" y="78" width="1" height="4" fill="#a0a0a0"/><polyline points="527.5,81.5 531.5,78.5 535.5,81.5" fill="none" stroke="#a0a0a0" stroke-width="1" />
<rect x="545" y="65" width="1" height="18" fill="#a0a0a0"/><rect x="546" y="65" width="1" height="18" fill="#fff"/>
<path d="M556.3935 66.0 H562.6065 L567.0 70.3935 V76.6065 L562.6065 81.0 H556.3935 L552.0 76.6065 V70.3935 Z" fill="#a0a0a0" shape-rendering="auto"/><rect x="558" y="69" width="3" height="5" fill="#fff"/><rect x="558" y="76" width="3" height="2" fill="#fff"/>
<path d="M579.3935 66.0 H585.6065 L590.0 70.3935 V76.6065 L585.6065 81.0 H579.3935 L575.0 76.6065 V70.3935 Z" fill="#a0a0a0" shape-rendering="auto"/><path d="M580 71 L585 76 M585 71 L580 76" fill="none" stroke="#fff" stroke-width="1.8" shape-rendering="auto"/>
<rect x="596" y="65" width="1" height="18" fill="#a0a0a0"/><rect x="597" y="65" width="1" height="18" fill="#fff"/>
<rect x="13" y="92" width="9" height="9" fill="#a0a0a0"/><rect x="19" y="98" width="9" height="8" fill="#a0a0a0"/><rect x="16" y="95" width="9" height="8" fill="url(#chkg)"/>
<rect x="36" y="92" width="9" height="9" fill="#a0a0a0"/><rect x="42" y="98" width="9" height="8" fill="#a0a0a0"/><rect x="39" y="95" width="9" height="8" fill="url(#chkg)"/>
<rect x="58" y="91" width="1" height="17" fill="#a0a0a0"/><rect x="59" y="91" width="1" height="17" fill="#fff"/>
<circle cx="71" cy="98" r="5.2" fill="#fff" stroke="#000" stroke-width="1.6" shape-rendering="auto"/><path d="M74.5 101.5 L79.5 106.5" fill="none" stroke="#000" stroke-width="2.4" shape-rendering="auto"/><path d="M67.5 96 A4.5 4.5 0 0 1 69 94.3" fill="none" stroke="#00ffff" stroke-width="1" shape-rendering="auto"/><rect x="68" y="97" width="7" height="2" fill="#000"/><rect x="70" y="95" width="2" height="6" fill="#000"/>
<circle cx="94" cy="98" r="5.2" fill="#fff" stroke="#000" stroke-width="1.6" shape-rendering="auto"/><path d="M97.5 101.5 L102.5 106.5" fill="none" stroke="#000" stroke-width="2.4" shape-rendering="auto"/><path d="M90.5 96 A4.5 4.5 0 0 1 92 94.3" fill="none" stroke="#00ffff" stroke-width="1" shape-rendering="auto"/><rect x="91" y="97" width="6" height="2" fill="#000"/>
<rect x="109" y="91" width="1" height="17" fill="#a0a0a0"/><rect x="110" y="91" width="1" height="17" fill="#fff"/>
<path d="M116 96 L119 93 H124 L126 95 H131 V106 H116 Z" fill="url(#chkg)" shape-rendering="auto"/><path d="M116.5 96 L119 93.5 H124 L126 95.5 H130.5 V105.5 H116.5 Z" fill="none" stroke="#b8b8b8" stroke-width="1" shape-rendering="auto"/>
<rect x="137" y="91" width="1" height="17" fill="#a0a0a0"/><rect x="138" y="91" width="1" height="17" fill="#fff"/>
<circle cx="151" cy="99" r="6.5" fill="url(#chkg)" stroke="#b0b0b0" stroke-width="1" shape-rendering="auto"/><path d="M145 98 H157 M151 93 V105" fill="none" stroke="#c8c8c8" stroke-width="1" />
<path d="M167 92 H180 V96 H179 V94 H172 V98 H176 V97 H177 V101 H176 V100 H172 V104 H174 V106 H167 V104 H169 V94 H167 Z" fill="#a0a0a0" />
<path d="M629 40 V51 L631.5 48.5 L634 53 L636 52 L633.8 47.8 L637.5 47.8 Z" fill="#000" shape-rendering="auto"/>
<polyline points="648.5,46.5 655.5,39.5" fill="none" stroke="#000" stroke-width="1" /><path d="M657.5 39.5 h6 v6 h-6 Z" fill="none" stroke="#000" stroke-width="1" /><rect x="648" y="51" width="1" height="1" fill="#000"/><rect x="649" y="50" width="1" height="1" fill="#000"/><rect x="650" y="49" width="1" height="1" fill="#000"/><rect x="651" y="48" width="1" height="1" fill="#000"/><rect x="652" y="49" width="1" height="1" fill="#000"/><rect x="653" y="50" width="1" height="1" fill="#000"/><rect x="654" y="51" width="1" height="1" fill="#000"/><rect x="653" y="52" width="1" height="1" fill="#000"/><rect x="652" y="53" width="1" height="1" fill="#000"/><rect x="651" y="54" width="1" height="1" fill="#000"/><rect x="650" y="53" width="1" height="1" fill="#000"/><rect x="649" y="52" width="1" height="1" fill="#000"/><rect x="659" y="48" width="1" height="1" fill="#000"/><rect x="660" y="48" width="1" height="1" fill="#000"/><rect x="661" y="48" width="1" height="1" fill="#000"/><rect x="658" y="49" width="1" height="1" fill="#000"/><rect x="662" y="49" width="1" height="1" fill="#000"/><rect x="657" y="50" width="1" height="1" fill="#000"/><rect x="663" y="50" width="1" height="1" fill="#000"/><rect x="657" y="51" width="1" height="1" fill="#000"/><rect x="663" y="51" width="1" height="1" fill="#000"/><rect x="657" y="52" width="1" height="1" fill="#000"/><rect x="663" y="52" width="1" height="1" fill="#000"/><rect x="658" y="53" width="1" height="1" fill="#000"/><rect x="662" y="53" width="1" height="1" fill="#000"/><rect x="659" y="54" width="1" height="1" fill="#000"/><rect x="660" y="54" width="1" height="1" fill="#000"/><rect x="661" y="54" width="1" height="1" fill="#000"/>
<path d="M672 45 H679 L675.5 49 Z" fill="#000" shape-rendering="auto"/>
<rect x="683" y="36" width="23" height="21" fill="url(#chk)"/><rect x="683" y="36" width="23" height="1" fill="#a0a0a0"/><rect x="683" y="36" width="1" height="21" fill="#a0a0a0"/><rect x="683" y="56" width="23" height="1" fill="#fff"/><rect x="705" y="36" width="1" height="21" fill="#fff"/>
<rect x="687" y="41" width="1" height="1" fill="#000"/><rect x="689" y="41" width="1" height="1" fill="#000"/><rect x="691" y="41" width="1" height="1" fill="#000"/><rect x="693" y="41" width="1" height="1" fill="#000"/><rect x="695" y="41" width="1" height="1" fill="#000"/><rect x="697" y="41" width="1" height="1" fill="#000"/><rect x="699" y="41" width="1" height="1" fill="#000"/><rect x="687" y="41" width="1" height="1" fill="#000"/><rect x="687" y="43" width="1" height="1" fill="#000"/><rect x="687" y="45" width="1" height="1" fill="#000"/><rect x="687" y="47" width="1" height="1" fill="#000"/><rect x="687" y="49" width="1" height="1" fill="#000"/><rect x="687" y="49" width="1" height="1" fill="#000"/><rect x="689" y="49" width="1" height="1" fill="#000"/><rect x="691" y="49" width="1" height="1" fill="#000"/><rect x="693" y="49" width="1" height="1" fill="#000"/><rect x="695" y="49" width="1" height="1" fill="#000"/><rect x="697" y="49" width="1" height="1" fill="#000"/><rect x="699" y="49" width="1" height="1" fill="#000"/><rect x="700" y="41" width="1" height="1" fill="#000"/><rect x="700" y="43" width="1" height="1" fill="#000"/><rect x="700" y="45" width="1" height="1" fill="#000"/><rect x="700" y="47" width="1" height="1" fill="#000"/><rect x="700" y="49" width="1" height="1" fill="#000"/><path d="M687 51 C691 55 693 52 695 47 C697 42 702 42 703 46" fill="none" stroke="#000080" stroke-width="1.1" shape-rendering="auto"/>
<path d="M709 45 C711 38 714 40 717 46 C719 51 722 49 725 45" fill="none" stroke="#000080" stroke-width="1.1" shape-rendering="auto"/><rect x="712" y="42" width="1" height="1" fill="#000"/><rect x="712" y="44" width="1" height="1" fill="#000"/><rect x="712" y="46" width="1" height="1" fill="#000"/><rect x="721" y="42" width="1" height="1" fill="#000"/><rect x="721" y="44" width="1" height="1" fill="#000"/><rect x="721" y="46" width="1" height="1" fill="#000"/><rect x="709" y="49" width="16" height="1" fill="#000"/><rect x="711" y="52" width="5" height="1" fill="#000"/><rect x="718" y="52" width="6" height="1" fill="#000"/><rect x="711" y="53" width="5" height="1" fill="#000"/><rect x="718" y="53" width="6" height="1" fill="#000"/>
<polyline points="732.5,40.5 734.5,40.5 734.5,43.5 747.5,43.5 747.5,40.5 748.5,40.5" fill="none" stroke="#000080" stroke-width="1" /><rect x="734" y="45" width="1" height="1" fill="#000"/><rect x="734" y="47" width="1" height="1" fill="#000"/><rect x="734" y="49" width="1" height="1" fill="#000"/><rect x="734" y="51" width="1" height="1" fill="#000"/><rect x="747" y="45" width="1" height="1" fill="#000"/><rect x="747" y="47" width="1" height="1" fill="#000"/><rect x="747" y="49" width="1" height="1" fill="#000"/><rect x="747" y="51" width="1" height="1" fill="#000"/><rect x="734" y="51" width="14" height="1" fill="#000"/><rect x="739" y="49" width="4" height="5" fill="#000"/><rect x="740" y="50" width="2" height="3" fill="#fff"/>
<rect x="757" y="40" width="1" height="1" fill="#000"/><rect x="759" y="40" width="1" height="1" fill="#000"/><rect x="761" y="40" width="1" height="1" fill="#000"/><rect x="763" y="40" width="1" height="1" fill="#000"/><rect x="765" y="40" width="1" height="1" fill="#000"/><rect x="757" y="41" width="1" height="4" fill="#000"/><path d="M755.5 42 L757.5 39 L759.5 42 Z" fill="#000" shape-rendering="auto"/><rect x="757" y="45" width="1" height="1" fill="#000"/><rect x="756" y="46" width="1" height="1" fill="#000"/><rect x="757" y="46" width="1" height="1" fill="#000"/><rect x="757" y="47" width="1" height="1" fill="#000"/><rect x="757" y="48" width="1" height="1" fill="#000"/><rect x="756" y="49" width="1" height="1" fill="#000"/><rect x="757" y="49" width="1" height="1" fill="#000"/><rect x="758" y="49" width="1" height="1" fill="#000"/><rect x="760" y="45" width="1" height="1" fill="#000"/><rect x="759" y="46" width="1" height="1" fill="#000"/><rect x="761" y="46" width="1" height="1" fill="#000"/><rect x="759" y="47" width="1" height="1" fill="#000"/><rect x="761" y="47" width="1" height="1" fill="#000"/><rect x="759" y="48" width="1" height="1" fill="#000"/><rect x="761" y="48" width="1" height="1" fill="#000"/><rect x="760" y="49" width="1" height="1" fill="#000"/><rect x="757" y="51" width="1" height="3" fill="#000"/><rect x="759" y="53" width="1" height="1" fill="#000"/><rect x="761" y="53" width="1" height="1" fill="#000"/><rect x="763" y="53" width="1" height="1" fill="#000"/><path d="M764 54 L767 43 C768 39 770 39 771 41" fill="none" stroke="#000080" stroke-width="1.1" shape-rendering="auto"/>
<rect x="787" y="39" width="1" height="1" fill="#000"/><rect x="786" y="40" width="1" height="1" fill="#000"/><rect x="787" y="40" width="1" height="1" fill="#000"/><rect x="787" y="41" width="1" height="1" fill="#000"/><rect x="787" y="42" width="1" height="1" fill="#000"/><rect x="786" y="43" width="1" height="1" fill="#000"/><rect x="787" y="43" width="1" height="1" fill="#000"/><rect x="788" y="43" width="1" height="1" fill="#000"/><rect x="790" y="43" width="1" height="1" fill="#000"/><rect x="793" y="39" width="1" height="1" fill="#000"/><rect x="792" y="40" width="1" height="1" fill="#000"/><rect x="794" y="40" width="1" height="1" fill="#000"/><rect x="792" y="41" width="1" height="1" fill="#000"/><rect x="794" y="41" width="1" height="1" fill="#000"/><rect x="792" y="42" width="1" height="1" fill="#000"/><rect x="794" y="42" width="1" height="1" fill="#000"/><rect x="793" y="43" width="1" height="1" fill="#000"/><rect x="787" y="44" width="7" height="1" fill="#000"/><polyline points="787.5,44.5 781.5,50.5" fill="none" stroke="#000" stroke-width="1" /><path d="M780 51 L781 47 L784 50 Z" fill="#000" shape-rendering="auto"/><polyline points="778.5,50.5 782.5,50.5 782.5,53.5 788.5,53.5 788.5,50.5 794.5,50.5" fill="none" stroke="#000080" stroke-width="1" />
<rect x="803" y="39" width="1" height="1" fill="#800000"/><rect x="804" y="39" width="1" height="1" fill="#800000"/><rect x="805" y="39" width="1" height="1" fill="#800000"/><rect x="803" y="40" width="1" height="1" fill="#800000"/><rect x="803" y="41" width="1" height="1" fill="#800000"/><rect x="804" y="41" width="1" height="1" fill="#800000"/><rect x="803" y="42" width="1" height="1" fill="#800000"/><rect x="803" y="43" width="1" height="1" fill="#800000"/><rect x="808" y="39" width="1" height="1" fill="#800000"/><rect x="807" y="40" width="1" height="1" fill="#800000"/><rect x="807" y="41" width="1" height="1" fill="#800000"/><rect x="807" y="42" width="1" height="1" fill="#800000"/><rect x="808" y="43" width="1" height="1" fill="#800000"/><rect x="810" y="39" width="1" height="1" fill="#800000"/><rect x="811" y="40" width="1" height="1" fill="#800000"/><rect x="811" y="41" width="1" height="1" fill="#800000"/><rect x="811" y="42" width="1" height="1" fill="#800000"/><rect x="810" y="43" width="1" height="1" fill="#800000"/><rect x="802" y="43" width="1" height="6" fill="#000"/><rect x="815" y="43" width="1" height="6" fill="#000"/><rect x="801" y="46" width="3" height="3" fill="#000"/><rect x="814" y="46" width="3" height="3" fill="#000"/><path d="M802 54 C804 47 812 47 815 54" fill="none" stroke="#000080" stroke-width="1.2" stroke-dasharray="2 1" shape-rendering="auto"/>
<path d="M825 40 H839 V44 H838 V42 H834 V51 H836 V53 H828 V51 H830 V42 H826 V44 H825 Z" fill="#000" />
<rect x="846" y="38" width="1" height="18" fill="#a0a0a0"/><rect x="847" y="38" width="1" height="18" fill="#fff"/>
<rect x="852" y="44" width="13" height="10" fill="#fff"/><path d="M852.5 44.5 h12 v9 h-12 Z" fill="none" stroke="#000" stroke-width="1" /><rect x="852" y="44" width="13" height="2" fill="#000"/><rect x="854" y="48" width="2" height="1" fill="#000"/><rect x="857" y="48" width="6" height="1" fill="#000"/><rect x="854" y="50" width="2" height="1" fill="#000"/><rect x="857" y="50" width="6" height="1" fill="#000"/><path d="M855 46 L859 41 H864 L864 45 L860 48 Z" fill="url(#chkk)" shape-rendering="auto"/><path d="M855 46 L859 41 H864 L865 43 L861 48" fill="none" stroke="#000" stroke-width="1" shape-rendering="auto"/><rect x="866" y="40" width="2" height="7" fill="#000080"/>
<rect x="874" y="38" width="1" height="18" fill="#a0a0a0"/><rect x="875" y="38" width="1" height="18" fill="#fff"/>
<path d="M882 41 L894 46.5 L882 52 Z" fill="#000" shape-rendering="auto"/>
<rect x="905" y="41" width="12" height="11" fill="#a0a0a0"/>
<rect x="929" y="41" width="4" height="11" fill="#a0a0a0"/><rect x="936" y="41" width="4" height="11" fill="#a0a0a0"/>
<rect x="948" y="38" width="1" height="18" fill="#a0a0a0"/><rect x="949" y="38" width="1" height="18" fill="#fff"/>
<polyline points="954.5,53.5 967.5,41.5 969.5,41.5" fill="none" stroke="#000" stroke-width="1" /><rect x="957" y="49" width="2" height="2" fill="#000"/><rect x="962" y="44" width="2" height="2" fill="#000"/>
<polyline points="980.5,51.5 990.5,41.5" fill="none" stroke="#000" stroke-width="1" /><path d="M977.5 50.5 h3 v3 h-3 Z M983.5 44.5 h3 v3 h-3 Z M988.5 39.5 h3 v3 h-3 Z" fill="none" stroke="#000" stroke-width="1" />
<rect x="999" y="38" width="1" height="18" fill="#a0a0a0"/><rect x="1000" y="38" width="1" height="18" fill="#fff"/>
<rect x="1005" y="39" width="16" height="15" fill="#000"/><rect x="1007" y="41" width="12" height="11" fill="#fff"/><rect x="1008" y="41" width="1" height="1" fill="#000"/><rect x="1008" y="51" width="1" height="1" fill="#000"/><rect x="1010" y="41" width="1" height="1" fill="#000"/><rect x="1010" y="51" width="1" height="1" fill="#000"/><rect x="1012" y="41" width="1" height="1" fill="#000"/><rect x="1012" y="51" width="1" height="1" fill="#000"/><rect x="1014" y="41" width="1" height="1" fill="#000"/><rect x="1014" y="51" width="1" height="1" fill="#000"/><rect x="1016" y="41" width="1" height="1" fill="#000"/><rect x="1016" y="51" width="1" height="1" fill="#000"/><rect x="1018" y="41" width="1" height="1" fill="#000"/><rect x="1018" y="51" width="1" height="1" fill="#000"/><rect x="1007" y="43" width="1" height="1" fill="#000"/><rect x="1018" y="43" width="1" height="1" fill="#000"/><rect x="1007" y="45" width="1" height="1" fill="#000"/><rect x="1018" y="45" width="1" height="1" fill="#000"/><rect x="1007" y="47" width="1" height="1" fill="#000"/><rect x="1018" y="47" width="1" height="1" fill="#000"/><rect x="1007" y="49" width="1" height="1" fill="#000"/><rect x="1018" y="49" width="1" height="1" fill="#000"/>
<rect x="1028" y="39" width="16" height="15" fill="#000"/><rect x="1030" y="41" width="12" height="11" fill="#fff"/><rect x="1033" y="41" width="1" height="2" fill="#000"/><rect x="1038" y="41" width="1" height="2" fill="#000"/><rect x="1033" y="50" width="1" height="2" fill="#000"/><rect x="1038" y="50" width="1" height="2" fill="#000"/><rect x="1030" y="44" width="2" height="1" fill="#000"/><rect x="1030" y="48" width="2" height="1" fill="#000"/><rect x="1040" y="44" width="2" height="1" fill="#000"/><rect x="1040" y="48" width="2" height="1" fill="#000"/><rect x="1032" y="44" width="3" height="1" fill="#000"/><rect x="1033" y="43" width="1" height="3" fill="#000"/><rect x="1032" y="48" width="3" height="1" fill="#000"/><rect x="1033" y="47" width="1" height="3" fill="#000"/><rect x="1037" y="44" width="3" height="1" fill="#000"/><rect x="1038" y="43" width="1" height="3" fill="#000"/><rect x="1037" y="48" width="3" height="1" fill="#000"/><rect x="1038" y="47" width="1" height="3" fill="#000"/>
<rect x="1053" y="36" width="23" height="21" fill="url(#chk)"/><rect x="1053" y="36" width="23" height="1" fill="#a0a0a0"/><rect x="1053" y="36" width="1" height="21" fill="#a0a0a0"/><rect x="1053" y="56" width="23" height="1" fill="#fff"/><rect x="1075" y="36" width="1" height="21" fill="#fff"/>
<rect x="1076" y="36" width="23" height="21" fill="url(#chk)"/><rect x="1076" y="36" width="23" height="1" fill="#a0a0a0"/><rect x="1076" y="36" width="1" height="21" fill="#a0a0a0"/><rect x="1076" y="56" width="23" height="1" fill="#fff"/><rect x="1098" y="36" width="1" height="21" fill="#fff"/>
<rect x="1099" y="36" width="23" height="21" fill="url(#chk)"/><rect x="1099" y="36" width="23" height="1" fill="#a0a0a0"/><rect x="1099" y="36" width="1" height="21" fill="#a0a0a0"/><rect x="1099" y="56" width="23" height="1" fill="#fff"/><rect x="1121" y="36" width="1" height="21" fill="#fff"/>
<rect x="1057" y="40" width="15" height="15" fill="#000"/><rect x="1059" y="42" width="11" height="11" fill="#fff"/><rect x="1060" y="42" width="1" height="11" fill="#000"/><rect x="1062" y="42" width="1" height="11" fill="#000"/><rect x="1064" y="42" width="1" height="11" fill="#000"/><rect x="1066" y="42" width="1" height="11" fill="#000"/><rect x="1068" y="42" width="1" height="11" fill="#000"/>
<rect x="1080" y="40" width="16" height="15" fill="#000"/><rect x="1082" y="42" width="12" height="11" fill="#fff"/><rect x="1082" y="44" width="12" height="1" fill="#000"/><rect x="1082" y="46" width="12" height="1" fill="#000"/><rect x="1082" y="48" width="12" height="1" fill="#000"/><rect x="1082" y="50" width="12" height="1" fill="#000"/>
<rect x="1103" y="40" width="16" height="15" fill="#000"/><rect x="1105" y="42" width="12" height="11" fill="#fff"/><rect x="1109" y="43" width="1" height="1" fill="#000"/><rect x="1109" y="45" width="1" height="1" fill="#000"/><rect x="1109" y="47" width="1" height="1" fill="#000"/><rect x="1109" y="49" width="1" height="1" fill="#000"/><rect x="1109" y="51" width="1" height="1" fill="#000"/><rect x="1111" y="43" width="1" height="1" fill="#000"/><rect x="1111" y="45" width="1" height="1" fill="#000"/><rect x="1111" y="47" width="1" height="1" fill="#000"/><rect x="1111" y="49" width="1" height="1" fill="#000"/><rect x="1111" y="51" width="1" height="1" fill="#000"/><rect x="1113" y="43" width="1" height="1" fill="#000"/><rect x="1113" y="45" width="1" height="1" fill="#000"/><rect x="1113" y="47" width="1" height="1" fill="#000"/><rect x="1113" y="49" width="1" height="1" fill="#000"/><rect x="1113" y="51" width="1" height="1" fill="#000"/><rect x="1115" y="43" width="1" height="1" fill="#000"/><rect x="1115" y="45" width="1" height="1" fill="#000"/><rect x="1115" y="47" width="1" height="1" fill="#000"/><rect x="1115" y="49" width="1" height="1" fill="#000"/><rect x="1115" y="51" width="1" height="1" fill="#000"/>
<rect x="1125" y="39" width="16" height="15" fill="#000"/><rect x="1127" y="41" width="12" height="11" fill="#fff"/><rect x="1131" y="42" width="1" height="1" fill="#000"/><rect x="1131" y="44" width="1" height="1" fill="#000"/><rect x="1131" y="46" width="1" height="1" fill="#000"/><rect x="1131" y="48" width="1" height="1" fill="#000"/><rect x="1131" y="50" width="1" height="1" fill="#000"/><rect x="1131" y="52" width="1" height="1" fill="#000"/><rect x="1135" y="42" width="1" height="1" fill="#000"/><rect x="1135" y="44" width="1" height="1" fill="#000"/><rect x="1135" y="46" width="1" height="1" fill="#000"/><rect x="1135" y="48" width="1" height="1" fill="#000"/><rect x="1135" y="50" width="1" height="1" fill="#000"/><rect x="1135" y="52" width="1" height="1" fill="#000"/><rect x="1131" y="41" width="1" height="1" fill="#000"/><rect x="1135" y="41" width="1" height="1" fill="#000"/>
<rect x="1147" y="38" width="1" height="18" fill="#a0a0a0"/><rect x="1148" y="38" width="1" height="18" fill="#fff"/>
<rect x="1153" y="39" width="16" height="15" fill="#000"/><rect x="1154" y="40" width="14" height="13" fill="#f0f0f0"/><rect x="1154" y="49" width="14" height="1" fill="#000"/>
<rect x="1180" y="39" width="1" height="1" fill="#000"/><rect x="1180" y="41" width="1" height="1" fill="#000"/><rect x="1180" y="43" width="1" height="1" fill="#000"/><rect x="1180" y="45" width="1" height="1" fill="#000"/><rect x="1180" y="47" width="1" height="1" fill="#000"/><rect x="1180" y="49" width="1" height="1" fill="#000"/><rect x="1180" y="51" width="1" height="1" fill="#000"/><rect x="1180" y="53" width="1" height="1" fill="#000"/><rect x="1176" y="47" width="1" height="1" fill="#000"/><rect x="1178" y="47" width="1" height="1" fill="#000"/><rect x="1180" y="47" width="1" height="1" fill="#000"/><rect x="1182" y="47" width="1" height="1" fill="#000"/><rect x="1184" y="47" width="1" height="1" fill="#000"/><rect x="1186" y="47" width="1" height="1" fill="#000"/><rect x="1188" y="47" width="1" height="1" fill="#000"/><polyline points="1176.5,49.5 1180.5,48.5 1191.5,41.5" fill="none" stroke="#0000ff" stroke-width="1" />
<rect x="1198" y="38" width="1" height="18" fill="#a0a0a0"/><rect x="1199" y="38" width="1" height="18" fill="#fff"/>
<rect x="1213" y="39" width="1" height="1" fill="#000"/><rect x="1213" y="41" width="1" height="1" fill="#000"/><rect x="1213" y="43" width="1" height="1" fill="#000"/><rect x="1213" y="45" width="1" height="1" fill="#000"/><rect x="1213" y="47" width="1" height="1" fill="#000"/><rect x="1213" y="49" width="1" height="1" fill="#000"/><rect x="1213" y="51" width="1" height="1" fill="#000"/><rect x="1213" y="53" width="1" height="1" fill="#000"/><polyline points="1206.5,53.5 1210.5,51.5 1212.5,48.5 1214.5,43.5 1218.5,39.5" fill="none" stroke="#0000ff" stroke-width="1" /><rect x="1206" y="45" width="6" height="1" fill="#000"/><path d="M1210 42 L1213 45.5 L1210 49 Z" fill="#000" shape-rendering="auto"/>
<rect x="1235" y="40" width="1" height="1" fill="#000"/><rect x="1235" y="42" width="1" height="1" fill="#000"/><rect x="1235" y="44" width="1" height="1" fill="#000"/><rect x="1235" y="46" width="1" height="1" fill="#000"/><rect x="1235" y="48" width="1" height="1" fill="#000"/><rect x="1235" y="50" width="1" height="1" fill="#000"/><rect x="1235" y="52" width="1" height="1" fill="#000"/><rect x="1235" y="54" width="1" height="1" fill="#000"/><polyline points="1227.5,51.5 1233.5,51.5 1242.5,44.5" fill="none" stroke="#0000ff" stroke-width="1" /><rect x="1235" y="42" width="1" height="7" fill="#000"/><path d="M1232 46 L1235.5 50 L1239 46 Z" fill="#000" shape-rendering="auto"/>
<rect x="1258" y="39" width="1" height="1" fill="#000"/><rect x="1258" y="41" width="1" height="1" fill="#000"/><rect x="1258" y="43" width="1" height="1" fill="#000"/><rect x="1258" y="45" width="1" height="1" fill="#000"/><rect x="1258" y="47" width="1" height="1" fill="#000"/><rect x="1258" y="49" width="1" height="1" fill="#000"/><rect x="1258" y="51" width="1" height="1" fill="#000"/><rect x="1258" y="53" width="1" height="1" fill="#000"/><rect x="1262" y="39" width="1" height="1" fill="#000"/><rect x="1262" y="41" width="1" height="1" fill="#000"/><rect x="1262" y="43" width="1" height="1" fill="#000"/><rect x="1262" y="45" width="1" height="1" fill="#000"/><rect x="1262" y="47" width="1" height="1" fill="#000"/><rect x="1262" y="49" width="1" height="1" fill="#000"/><rect x="1262" y="51" width="1" height="1" fill="#000"/><rect x="1262" y="53" width="1" height="1" fill="#000"/><polyline points="1250.5,51.5 1256.5,51.5 1266.5,44.5" fill="none" stroke="#0000ff" stroke-width="1" /><rect x="1258" y="42" width="1" height="7" fill="#000"/><path d="M1255 46 L1258.5 50 L1262 46 Z" fill="#000" shape-rendering="auto"/><path d="M1260 42 L1263.5 46 L1267 42 Z" fill="#000" shape-rendering="auto"/>
<path d="M1273 41 H1278 C1281 41 1281 46 1284 46 H1289 M1273 43.5 H1277 C1280 43.5 1280 48.5 1283 48.5 H1289 M1273 46 H1276 C1279 46 1279 51 1282 51 H1289" fill="none" stroke="#b8b8b8" stroke-width="1" shape-rendering="auto"/>
<rect x="1295" y="38" width="1" height="18" fill="#a0a0a0"/><rect x="1296" y="38" width="1" height="18" fill="#fff"/>
<rect x="1301" y="40" width="16" height="13" fill="#000080"/><rect x="1302" y="41" width="14" height="11" fill="#fff"/><polyline points="1303.5,45.5 1305.5,43.5 1307.5,45.5 1309.5,43.5 1311.5,45.5" fill="none" stroke="#0000ff" stroke-width="1" /><polyline points="1303.5,50.5 1305.5,50.5 1307.5,48.5 1309.5,50.5 1314.5,48.5" fill="none" stroke="#ff0000" stroke-width="1" /><path d="M1305 49 L1311 43 H1315 L1309 49 Z" fill="none" stroke="#000" stroke-width="1.5" shape-rendering="auto"/>
<rect x="1323" y="38" width="1" height="18" fill="#a0a0a0"/><rect x="1324" y="38" width="1" height="18" fill="#fff"/>
<rect x="622" y="62" width="23" height="21" fill="url(#chk)"/><rect x="622" y="62" width="23" height="1" fill="#a0a0a0"/><rect x="622" y="62" width="1" height="21" fill="#a0a0a0"/><rect x="622" y="82" width="23" height="1" fill="#fff"/><rect x="644" y="62" width="1" height="21" fill="#fff"/>
<rect x="633" y="66" width="1" height="1" fill="#000"/><rect x="633" y="68" width="1" height="1" fill="#000"/><rect x="633" y="70" width="1" height="1" fill="#000"/><rect x="633" y="72" width="1" height="1" fill="#000"/><rect x="633" y="74" width="1" height="1" fill="#000"/><rect x="633" y="76" width="1" height="1" fill="#000"/><rect x="633" y="78" width="1" height="1" fill="#000"/><rect x="633" y="80" width="1" height="1" fill="#000"/><rect x="626" y="73" width="16" height="1" fill="#0000ff"/><circle cx="628" cy="73.5" r="1.7" fill="#0000ff" shape-rendering="auto"/><circle cx="634" cy="73.5" r="1.7" fill="#0000ff" shape-rendering="auto"/><circle cx="640" cy="73.5" r="1.7" fill="#0000ff" shape-rendering="auto"/>
<rect x="655" y="66" width="1" height="1" fill="#000"/><rect x="655" y="68" width="1" height="1" fill="#000"/><rect x="655" y="70" width="1" height="1" fill="#000"/><rect x="655" y="72" width="1" height="1" fill="#000"/><rect x="655" y="74" width="1" height="1" fill="#000"/><rect x="655" y="76" width="1" height="1" fill="#000"/><rect x="655" y="78" width="1" height="1" fill="#000"/><rect x="648" y="72" width="16" height="1" fill="#0000ff"/><circle cx="650" cy="72.5" r="1.7" fill="#0000ff" shape-rendering="auto"/><circle cx="662" cy="72.5" r="1.7" fill="#0000ff" shape-rendering="auto"/>
<rect x="679" y="66" width="1" height="1" fill="#000"/><rect x="679" y="68" width="1" height="1" fill="#000"/><rect x="679" y="70" width="1" height="1" fill="#000"/><rect x="679" y="72" width="1" height="1" fill="#000"/><rect x="679" y="74" width="1" height="1" fill="#000"/><rect x="679" y="76" width="1" height="1" fill="#000"/><rect x="679" y="78" width="1" height="1" fill="#000"/><rect x="679" y="80" width="1" height="1" fill="#000"/><path d="M671 80 C674 77 675 65 679 65 C683 65 684 77 687 80" fill="none" stroke="#0000ff" stroke-width="1" shape-rendering="auto"/>
<rect x="702" y="66" width="1" height="1" fill="#000"/><rect x="702" y="68" width="1" height="1" fill="#000"/><rect x="702" y="70" width="1" height="1" fill="#000"/><rect x="702" y="72" width="1" height="1" fill="#000"/><rect x="702" y="74" width="1" height="1" fill="#000"/><rect x="702" y="76" width="1" height="1" fill="#000"/><rect x="702" y="78" width="1" height="1" fill="#000"/><rect x="702" y="80" width="1" height="1" fill="#000"/><path d="M694 65 C697 68 698 80 702 80 C706 80 707 68 710 65" fill="none" stroke="#0000ff" stroke-width="1" shape-rendering="auto"/>
<rect x="725" y="66" width="1" height="1" fill="#000"/><rect x="725" y="68" width="1" height="1" fill="#000"/><rect x="725" y="70" width="1" height="1" fill="#000"/><rect x="725" y="72" width="1" height="1" fill="#000"/><rect x="725" y="74" width="1" height="1" fill="#000"/><rect x="725" y="76" width="1" height="1" fill="#000"/><rect x="725" y="78" width="1" height="1" fill="#000"/><rect x="725" y="80" width="1" height="1" fill="#000"/><path d="M717 76 C719 72 721 80 723 75 C724 71 725 66 726 67 C728 70 730 77 733 76" fill="none" stroke="#0000ff" stroke-width="1" shape-rendering="auto"/>
<rect x="748" y="66" width="1" height="1" fill="#000"/><rect x="748" y="68" width="1" height="1" fill="#000"/><rect x="748" y="70" width="1" height="1" fill="#000"/><rect x="748" y="72" width="1" height="1" fill="#000"/><rect x="748" y="74" width="1" height="1" fill="#000"/><rect x="748" y="76" width="1" height="1" fill="#000"/><rect x="748" y="78" width="1" height="1" fill="#000"/><rect x="748" y="80" width="1" height="1" fill="#000"/><path d="M740 68 C742 64 744 70 746 70 C747 74 748 79 749 78 C751 75 753 70 756 67" fill="none" stroke="#0000ff" stroke-width="1" shape-rendering="auto"/>
<rect x="770" y="65" width="1" height="1" fill="#000"/><rect x="770" y="67" width="1" height="1" fill="#000"/><rect x="770" y="69" width="1" height="1" fill="#000"/><rect x="770" y="71" width="1" height="1" fill="#000"/><rect x="770" y="73" width="1" height="1" fill="#000"/><rect x="770" y="75" width="1" height="1" fill="#000"/><rect x="770" y="77" width="1" height="1" fill="#000"/><rect x="770" y="79" width="1" height="1" fill="#000"/><polyline points="763.5,79.5 779.5,65.5" fill="none" stroke="#0000ff" stroke-width="1" />
<rect x="793" y="66" width="1" height="1" fill="#000"/><rect x="793" y="68" width="1" height="1" fill="#000"/><rect x="793" y="70" width="1" height="1" fill="#000"/><rect x="793" y="72" width="1" height="1" fill="#000"/><rect x="793" y="74" width="1" height="1" fill="#000"/><rect x="793" y="76" width="1" height="1" fill="#000"/><rect x="793" y="78" width="1" height="1" fill="#000"/><rect x="793" y="80" width="1" height="1" fill="#000"/><path d="M786 76 C789 70 791 65 794 66 C796 67 799 75 801 78 M791 78 C793 73 795 68 798 68 C800 68 801 70 802 71" fill="none" stroke="#0000ff" stroke-width="1" shape-rendering="auto"/>
<rect x="816" y="66" width="1" height="1" fill="#000"/><rect x="816" y="68" width="1" height="1" fill="#000"/><rect x="816" y="70" width="1" height="1" fill="#000"/><rect x="816" y="72" width="1" height="1" fill="#000"/><rect x="816" y="74" width="1" height="1" fill="#000"/><rect x="816" y="76" width="1" height="1" fill="#000"/><rect x="816" y="78" width="1" height="1" fill="#000"/><rect x="816" y="80" width="1" height="1" fill="#000"/><path d="M809 68 C811 72 813 79 816 79 C818 78 820 72 823 66 M813 66 C815 70 817 77 820 76 C822 75 823 73 825 73" fill="none" stroke="#0000ff" stroke-width="1" shape-rendering="auto"/>
<rect x="840" y="65" width="1" height="1" fill="#000"/><rect x="840" y="67" width="1" height="1" fill="#000"/><rect x="840" y="69" width="1" height="1" fill="#000"/><rect x="840" y="71" width="1" height="1" fill="#000"/><rect x="840" y="73" width="1" height="1" fill="#000"/><rect x="840" y="75" width="1" height="1" fill="#000"/><rect x="840" y="77" width="1" height="1" fill="#000"/><rect x="840" y="79" width="1" height="1" fill="#000"/><path d="M832 66 C835 66 836 71 840 71 C844 71 845 67 848 66 M832 70 C835 70 836 75 840 75 C844 75 845 71 848 70 M832 74 C835 74 836 79 840 79 C844 79 845 75 848 74" fill="none" stroke="#0000ff" stroke-width="1" shape-rendering="auto"/><circle cx="840" cy="77.5" r="2" fill="#0000ff" shape-rendering="auto"/>
<rect x="863" y="65" width="1" height="1" fill="#000"/><rect x="863" y="67" width="1" height="1" fill="#000"/><rect x="863" y="69" width="1" height="1" fill="#000"/><rect x="863" y="71" width="1" height="1" fill="#000"/><rect x="863" y="73" width="1" height="1" fill="#000"/><rect x="863" y="75" width="1" height="1" fill="#000"/><rect x="863" y="77" width="1" height="1" fill="#000"/><rect x="863" y="79" width="1" height="1" fill="#000"/><path d="M855 79 C858 79 859 73 863 73 C867 73 868 78 871 79 M855 75 C858 75 859 69 863 69 C867 69 868 74 871 75 M855 71 C858 71 859 65 863 65 C867 65 868 70 871 71" fill="none" stroke="#0000ff" stroke-width="1" shape-rendering="auto"/><circle cx="863" cy="67.5" r="2" fill="#0000ff" shape-rendering="auto"/>
<rect x="877" y="64" width="1" height="18" fill="#a0a0a0"/><rect x="878" y="64" width="1" height="18" fill="#fff"/>
<pattern id="chky" width="2" height="2" patternUnits="userSpaceOnUse"><rect width="2" height="2" fill="#ffff00"/><rect width="1" height="1" fill="#808000"/></pattern><path d="M883 71 H896 L899 68 V77 L896 80 H883 Z" fill="url(#chky)" shape-rendering="auto"/><path d="M883.5 71.5 H896.5 V79.5 H883.5 Z M896.5 71.5 L899 69 V77 L896.5 79.5" fill="none" stroke="#000" stroke-width="1" shape-rendering="auto"/><rect x="888" y="74" width="4" height="3" fill="#000"/><rect x="889" y="77" width="2" height="1" fill="#000"/><path d="M884 70 L887 66 L891 69 L889 71 Z" fill="#0000ff" shape-rendering="auto"/><rect x="885" y="68" width="2" height="2" fill="#fff"/><rect x="890" y="65" width="6" height="6" fill="#ff0000"/><rect x="892" y="66" width="3" height="4" fill="#fff"/><rect x="893" y="67" width="2" height="2" fill="#ff0000"/>
<path d="M907 71 H914 L910.5 75 Z" fill="#000" shape-rendering="auto"/>
<rect x="920" y="64" width="1" height="18" fill="#a0a0a0"/><rect x="921" y="64" width="1" height="18" fill="#fff"/>
<rect x="926" y="65" width="16" height="15" fill="#000"/><rect x="928" y="67" width="12" height="11" fill="#fff"/><rect x="929" y="68" width="3" height="1" fill="#000"/><rect x="933" y="68" width="3" height="1" fill="#000"/><rect x="937" y="68" width="3" height="1" fill="#000"/><rect x="929" y="70" width="3" height="1" fill="#000"/><rect x="933" y="70" width="3" height="1" fill="#000"/><rect x="937" y="70" width="3" height="1" fill="#000"/><rect x="929" y="72" width="3" height="1" fill="#000"/><rect x="933" y="72" width="3" height="1" fill="#000"/><rect x="937" y="72" width="3" height="1" fill="#000"/><rect x="929" y="74" width="3" height="1" fill="#000"/><rect x="933" y="74" width="3" height="1" fill="#000"/><rect x="937" y="74" width="3" height="1" fill="#000"/><rect x="929" y="76" width="3" height="1" fill="#000"/><rect x="933" y="76" width="3" height="1" fill="#000"/><rect x="937" y="76" width="3" height="1" fill="#000"/>
<rect x="948" y="64" width="1" height="18" fill="#a0a0a0"/><rect x="949" y="64" width="1" height="18" fill="#fff"/>
<rect x="954" y="65" width="2" height="4" fill="#000"/><rect x="957" y="66" width="2" height="14" fill="#000"/><rect x="957" y="66" width="7" height="2" fill="#000"/><rect x="964" y="67" width="2" height="1" fill="#000"/><rect x="965" y="68" width="2" height="4" fill="#000"/><rect x="964" y="72" width="2" height="1" fill="#000"/><rect x="957" y="72" width="8" height="2" fill="#000"/><rect x="968" y="65" width="2" height="4" fill="#000"/>
<rect x="976" y="64" width="1" height="18" fill="#a0a0a0"/><rect x="977" y="64" width="1" height="18" fill="#fff"/>
<rect x="979" y="62" width="23" height="21" fill="url(#chk)"/><rect x="979" y="62" width="23" height="1" fill="#a0a0a0"/><rect x="979" y="62" width="1" height="21" fill="#a0a0a0"/><rect x="979" y="82" width="23" height="1" fill="#fff"/><rect x="1001" y="62" width="1" height="21" fill="#fff"/>
<rect x="1002" y="62" width="23" height="21" fill="url(#chk)"/><rect x="1002" y="62" width="23" height="1" fill="#a0a0a0"/><rect x="1002" y="62" width="1" height="21" fill="#a0a0a0"/><rect x="1002" y="82" width="23" height="1" fill="#fff"/><rect x="1024" y="62" width="1" height="21" fill="#fff"/>
<rect x="991" y="69" width="1" height="11" fill="#000"/><rect x="987" y="79" width="9" height="2" fill="#000"/><polyline points="985.5,74.5 991.5,69.5 997.5,74.5" fill="none" stroke="#000" stroke-width="1" /><path d="M984 75 Q986 78 988 75 M995 75 Q997 78 999 75" fill="none" stroke="#c0a000" stroke-width="1.2" shape-rendering="auto"/>
<polyline points="984.5,65.5 988.5,69.5" fill="none" stroke="#800000" stroke-width="2" /><polyline points="988.5,65.5 984.5,69.5" fill="none" stroke="#800000" stroke-width="2" />
<rect x="1014" y="69" width="1" height="11" fill="#000"/><rect x="1010" y="79" width="9" height="2" fill="#000"/><polyline points="1008.5,74.5 1014.5,69.5 1020.5,74.5" fill="none" stroke="#000" stroke-width="1" /><path d="M1007 75 Q1009 78 1011 75 M1018 75 Q1020 78 1022 75" fill="none" stroke="#c0a000" stroke-width="1.2" shape-rendering="auto"/>
<polyline points="1007.5,65.5 1009.5,67.5 1011.5,65.5" fill="none" stroke="#800000" stroke-width="2" /><rect x="1009" y="67" width="2" height="3" fill="#800000"/>
<rect x="1027" y="64" width="1" height="18" fill="#a0a0a0"/><rect x="1028" y="64" width="1" height="18" fill="#fff"/>
<circle cx="1040" cy="71" r="5.2" fill="#fff" stroke="#000" stroke-width="1.6" shape-rendering="auto"/><path d="M1043.5 74.5 L1048.5 79.5" fill="none" stroke="#000" stroke-width="2.4" shape-rendering="auto"/><path d="M1036.5 69 A4.5 4.5 0 0 1 1038 67.3" fill="none" stroke="#00ffff" stroke-width="1" shape-rendering="auto"/><rect x="1037" y="70" width="7" height="2" fill="#000"/><rect x="1039" y="68" width="2" height="6" fill="#000"/>
<circle cx="1063" cy="71" r="5.2" fill="#fff" stroke="#000" stroke-width="1.6" shape-rendering="auto"/><path d="M1066.5 74.5 L1071.5 79.5" fill="none" stroke="#000" stroke-width="2.4" shape-rendering="auto"/><path d="M1059.5 69 A4.5 4.5 0 0 1 1061 67.3" fill="none" stroke="#00ffff" stroke-width="1" shape-rendering="auto"/><rect x="1060" y="70" width="6" height="2" fill="#000"/>
<circle cx="1086" cy="71" r="5.2" fill="#fff" stroke="#000" stroke-width="1.6" shape-rendering="auto"/><path d="M1089.5 74.5 L1094.5 79.5" fill="none" stroke="#000" stroke-width="2.4" shape-rendering="auto"/><path d="M1082.5 69 A4.5 4.5 0 0 1 1084 67.3" fill="none" stroke="#00ffff" stroke-width="1" shape-rendering="auto"/><rect x="1083" y="69" width="7" height="5" fill="#0000c0"/><rect x="1084" y="70" width="5" height="3" fill="#fff"/><polyline points="1084.5,72.5 1085.5,70.5 1086.5,72.5 1087.5,70.5 1088.5,72.5" fill="none" stroke="#ff0000" stroke-width="1" />
<rect x="1101" y="64" width="1" height="18" fill="#a0a0a0"/><rect x="1102" y="64" width="1" height="18" fill="#fff"/>
<circle cx="1115" cy="73" r="6.5" fill="url(#chkg)" stroke="#b0b0b0" stroke-width="1" shape-rendering="auto"/><path d="M1109 72 H1121 M1115 67 V79" fill="none" stroke="#c8c8c8" stroke-width="1" />
<path d="M1131 65 H1144 V69 H1143 V67 H1136 V71 H1140 V70 H1141 V74 H1140 V73 H1136 V77 H1138 V79 H1131 V77 H1133 V67 H1131 Z" fill="#000" />
</svg>
<svg style="left:0;top:0" width="1405" height="712" shape-rendering="crispEdges" font-family="Liberation Sans, sans-serif">
<rect x="227" y="368" width="145" height="1" fill="#008000"/>
<rect x="227" y="368" width="1" height="74" fill="#008000"/>
<rect x="371" y="368" width="1" height="23" fill="#0000ff"/>
<rect x="364" y="390" width="16" height="1" fill="#0000ff"/>
<rect x="368" y="394" width="8" height="1" fill="#0000ff"/>
<rect x="371" y="394" width="1" height="35" fill="#0000ff"/>
<rect x="363" y="428" width="18" height="1" fill="#0000ff"/><rect x="367" y="434" width="10" height="1" fill="#0000ff"/>
<text x="346" y="400" fill="#008000" font-size="12.5" text-anchor="start" letter-spacing="0.2">V6</text>
<rect x="227" y="454" width="1" height="7" fill="#0000ff"/>
<polyline points="227.5,460.5 222.5,462.5 231.5,466.5 222.5,470.5 231.5,474.5 222.5,478.5 231.5,482.5 227.5,484.5" fill="none" stroke="#0000ff" stroke-width="1"/>
<rect x="227" y="484" width="1" height="6" fill="#0000ff"/>
<text x="192" y="466" fill="#008000" font-size="12.5" text-anchor="start" letter-spacing="0.2">R2</text>
<text x="188" y="481" fill="#008000" font-size="12.5" text-anchor="start" letter-spacing="0.2">33k</text>
<polygon points="218.5,441.5 235.5,441.5 238.5,444.5 238.5,451.5 235.5,454.5 218.5,454.5 215.5,451.5 215.5,444.5 218.5,441.5" fill="#fff" stroke="#ff00ff" stroke-width="1"/><text x="227.0" y="452" fill="#000" font-size="11" text-anchor="middle">300</text>
<rect x="227" y="502" width="1" height="42" fill="#008000"/>
<polygon points="207.5,489.5 246.5,489.5 249.5,492.5 249.5,499.5 246.5,502.5 207.5,502.5 204.5,499.5 204.5,492.5 207.5,489.5" fill="#fff" stroke="#ff00ff" stroke-width="1"/><text x="227.0" y="500" fill="#000" font-size="11" text-anchor="middle">122.939</text>
<rect x="227" y="512" width="23" height="1" fill="#0000ff"/>
<rect x="249" y="504" width="1" height="17" fill="#0000ff"/>
<rect x="253" y="504" width="1" height="17" fill="#0000ff"/>
<rect x="253" y="512" width="24" height="1" fill="#0000ff"/>
<rect x="276" y="512" width="192" height="1" fill="#008000"/>
<text x="242" y="536" fill="#008000" font-size="12.5" text-anchor="start" letter-spacing="0.2">C4</text>
<text x="253" y="551" fill="#008000" font-size="12.5" text-anchor="start" letter-spacing="0.2">1</text>
<rect x="467" y="512" width="1" height="16" fill="#008000"/>
<rect x="467" y="527" width="1" height="14" fill="#0000ff"/>
<polyline points="467.5,540.5 462.5,542.5 471.5,546.5 462.5,550.5 471.5,554.5 462.5,558.5 471.5,562.5 467.5,564.5" fill="none" stroke="#0000ff" stroke-width="1"/>
<rect x="467" y="564" width="1" height="25" fill="#0000ff"/>
<rect x="459" y="588" width="18" height="1" fill="#0000ff"/><rect x="463" y="594" width="10" height="1" fill="#0000ff"/>
<text x="426" y="546" fill="#008000" font-size="12.5" text-anchor="start" letter-spacing="0.2">R13</text>
<text x="433" y="561" fill="#008000" font-size="12.5" text-anchor="start" letter-spacing="0.2">1k2</text>
<text x="354" y="509" fill="#800000" font-size="12.5" text-anchor="start" letter-spacing="0.2">A</text>
<circle cx="355.5" cy="512.5" r="2.6" fill="#ff0000" shape-rendering="auto"/>
<polygon points="355.5,513.5 402.5,513.5 405.5,516.5 405.5,523.5 402.5,526.5 355.5,526.5 352.5,523.5 352.5,516.5 355.5,513.5" fill="#fff" stroke="#ff00ff" stroke-width="1"/><text x="379.0" y="524" fill="#000" font-size="11" text-anchor="middle">-143.861u</text>
<circle cx="227.5" cy="512.5" r="2.6" fill="#ff0000" shape-rendering="auto"/>
<rect x="227" y="543" width="1" height="10" fill="#0000ff"/>
<rect x="219" y="552" width="17" height="1" fill="#0000ff"/>
<circle cx="227.5" cy="560.5" r="15" fill="none" stroke="#0000ff" stroke-width="1"/>
<rect x="224" y="560" width="2" height="1" fill="#0000ff"/>
<rect x="229" y="560" width="5" height="1" fill="#0000ff"/>
<rect x="237" y="560" width="6" height="1" fill="#0000ff"/>
<rect x="219" y="568" width="17" height="1" fill="#0000ff"/>
<rect x="235" y="568" width="1" height="4" fill="#0000ff"/>
<rect x="219" y="568" width="1" height="19" fill="#0000ff"/>
<rect x="131" y="560" width="52" height="1" fill="#008000"/>
<polygon points="185.5,553.5 220.5,553.5 223.5,556.5 223.5,563.5 220.5,566.5 185.5,566.5 182.5,563.5 182.5,556.5 185.5,553.5" fill="#fff" stroke="#ff00ff" stroke-width="1"/><text x="203.0" y="564" fill="#000" font-size="11" text-anchor="middle">-0.551f</text>
<rect x="131" y="560" width="1" height="13" fill="#0000ff"/>
<circle cx="131" cy="583.5" r="11.6" fill="none" stroke="#0000ff" stroke-width="1"/>
<rect x="131" y="595" width="1" height="26" fill="#0000ff"/>
<rect x="123" y="620" width="18" height="1" fill="#0000ff"/><rect x="127" y="626" width="10" height="1" fill="#0000ff"/>
<rect x="122" y="567" width="5" height="1" fill="#0000ff"/>
<rect x="124" y="565" width="1" height="5" fill="#0000ff"/>
<rect x="122" y="601" width="5" height="1" fill="#0000ff"/>
<text x="145" y="592" fill="#008000" font-size="12.5" text-anchor="start" letter-spacing="0.2">V2</text>
<polygon points="209.5,586.5 229.5,586.5 232.5,589.5 232.5,595.5 229.5,598.5 209.5,598.5 206.5,595.5 206.5,589.5 209.5,586.5" fill="#fff" stroke="#ff00ff" stroke-width="1"/><text x="219.5" y="597" fill="#000" font-size="11" text-anchor="middle">1.61</text>
<rect x="219" y="598" width="1" height="7" fill="#0000ff"/>
<polyline points="219.5,604.5 214.5,606.5 223.5,610.5 214.5,614.5 223.5,618.5 214.5,622.5 223.5,626.5 219.5,628.5" fill="none" stroke="#0000ff" stroke-width="1"/>
<rect x="219" y="628" width="1" height="25" fill="#0000ff"/>
<rect x="211" y="652" width="18" height="1" fill="#0000ff"/><rect x="215" y="658" width="10" height="1" fill="#0000ff"/>
<text x="185" y="610" fill="#008000" font-size="12.5" text-anchor="start" letter-spacing="0.2">R1</text>
<text x="179" y="625" fill="#008000" font-size="12.5" text-anchor="start" letter-spacing="0.2">300</text>
<text x="237" y="595" fill="#008000" font-size="12.5" text-anchor="start" letter-spacing="0.2">X3</text>
<text x="237" y="610" fill="#008000" font-size="12.5" text-anchor="start" letter-spacing="0.2">6J9P_T</text>
</svg>
<svg style="left:0;top:0" width="1405" height="712" shape-rendering="crispEdges" font-family="Liberation Sans, sans-serif">
<defs><clipPath id="pc"><rect x="621" y="90" width="775" height="594"/></clipPath></defs><g clip-path="url(#pc)">
<line x1="740.5" y1="104" x2="740.5" y2="250" stroke="#808080" stroke-width="1" stroke-dasharray="3 3"/>
<line x1="818.5" y1="104" x2="818.5" y2="250" stroke="#808080" stroke-width="1" stroke-dasharray="3 3"/>
<line x1="897.5" y1="104" x2="897.5" y2="250" stroke="#808080" stroke-width="1" stroke-dasharray="3 3"/>
<line x1="975.5" y1="104" x2="975.5" y2="250" stroke="#808080" stroke-width="1" stroke-dasharray="3 3"/>
<line x1="1054.5" y1="104" x2="1054.5" y2="250" stroke="#808080" stroke-width="1" stroke-dasharray="3 3"/>
<line x1="1132.5" y1="104" x2="1132.5" y2="250" stroke="#808080" stroke-width="1" stroke-dasharray="3 3"/>
<line x1="1211.5" y1="104" x2="1211.5" y2="250" stroke="#808080" stroke-width="1" stroke-dasharray="3 3"/>
<line x1="1289.5" y1="104" x2="1289.5" y2="250" stroke="#808080" stroke-width="1" stroke-dasharray="3 3"/>
<line x1="662" y1="132.5" x2="1368" y2="132.5" stroke="#808080" stroke-width="1" stroke-dasharray="3 3"/>
<line x1="662" y1="162.5" x2="1368" y2="162.5" stroke="#808080" stroke-width="1" stroke-dasharray="3 3"/>
<line x1="662" y1="191.5" x2="1368" y2="191.5" stroke="#808080" stroke-width="1" stroke-dasharray="3 3"/>
<line x1="662" y1="221.5" x2="1368" y2="221.5" stroke="#808080" stroke-width="1" stroke-dasharray="3 3"/>
<rect x="661.5" y="103.5" width="707" height="147" fill="none" stroke="#808080" stroke-width="1"/>
<text x="658.5" y="107" fill="#0000ff" font-size="10.8" text-anchor="end" >2.000</text>
<text x="658.5" y="136" fill="#0000ff" font-size="10.8" text-anchor="end" >1.600</text>
<text x="658.5" y="166" fill="#0000ff" font-size="10.8" text-anchor="end" >1.200</text>
<text x="658.5" y="195" fill="#0000ff" font-size="10.8" text-anchor="end" >0.800</text>
<text x="658.5" y="225" fill="#0000ff" font-size="10.8" text-anchor="end" >0.400</text>
<text x="658.5" y="254" fill="#0000ff" font-size="10.8" text-anchor="end" >0.000</text>
<text x="661" y="261" fill="#0000ff" font-size="10.8" text-anchor="start" >1.000K</text>
<text x="740.0555555555555" y="261" fill="#0000ff" font-size="10.8" text-anchor="middle" >2.000K</text>
<text x="818.6111111111111" y="261" fill="#0000ff" font-size="10.8" text-anchor="middle" >3.000K</text>
<text x="897.1666666666666" y="261" fill="#0000ff" font-size="10.8" text-anchor="middle" >4.000K</text>
<text x="975.7222222222222" y="261" fill="#0000ff" font-size="10.8" text-anchor="middle" >5.000K</text>
<text x="1054.2777777777778" y="261" fill="#0000ff" font-size="10.8" text-anchor="middle" >6.000K</text>
<text x="1132.8333333333333" y="261" fill="#0000ff" font-size="10.8" text-anchor="middle" >7.000K</text>
<text x="1211.388888888889" y="261" fill="#0000ff" font-size="10.8" text-anchor="middle" >8.000K</text>
<text x="1289.9444444444443" y="261" fill="#0000ff" font-size="10.8" text-anchor="middle" >9.000K</text>
<text x="1368.5" y="261" fill="#0000ff" font-size="10.8" text-anchor="middle" >10.000K</text>
<text x="661" y="274" fill="#0000ff" font-size="11" text-anchor="start" textLength="56" lengthAdjust="spacingAndGlyphs">HARM(V(A))</text>
<rect x="661" y="275" width="56" height="1" fill="#0000ff"/>
<text x="964" y="286.5" fill="#0000ff" font-size="11" text-anchor="middle" >F (Hz)</text>
<text x="1015" y="100.5" fill="#0000ff" font-size="10" text-anchor="middle" >pokemon.cir</text>
<rect x="944" y="107" width="159" height="15" fill="#fff"/>
<text x="945" y="117" fill="#0000ff" font-size="11" text-anchor="start" >Amplitude of V(A) vs Frequency</text>
<rect x="661" y="160" width="1" height="90" fill="#0000ff"/>
<rect x="661" y="156" width="4" height="6" fill="#0000ff"/>
<rect x="738" y="247" width="6" height="3" fill="#0000ff"/>
<rect x="816" y="247" width="6" height="3" fill="#0000ff"/>
<rect x="895" y="247" width="6" height="3" fill="#0000ff"/>
<rect x="973" y="247" width="6" height="3" fill="#0000ff"/>
<rect x="1052" y="247" width="6" height="3" fill="#0000ff"/>
<rect x="1130" y="247" width="6" height="3" fill="#0000ff"/>
<rect x="1209" y="247" width="6" height="3" fill="#0000ff"/>
<rect x="1287" y="247" width="6" height="3" fill="#0000ff"/>
<rect x="1366" y="247" width="3" height="3" fill="#0000ff"/>
<line x1="662" y1="331.5" x2="1368" y2="331.5" stroke="#808080" stroke-width="1" stroke-dasharray="3 3"/>
<line x1="662" y1="323.5" x2="1368" y2="323.5" stroke="#808080" stroke-width="1" stroke-dasharray="3 3"/>
<line x1="662" y1="316.5" x2="1368" y2="316.5" stroke="#808080" stroke-width="1" stroke-dasharray="3 3"/>
<line x1="662" y1="312.5" x2="1368" y2="312.5" stroke="#808080" stroke-width="1" stroke-dasharray="3 3"/>
<line x1="662" y1="308.5" x2="1368" y2="308.5" stroke="#808080" stroke-width="1" stroke-dasharray="3 3"/>
<line x1="662" y1="305.5" x2="1368" y2="305.5" stroke="#808080" stroke-width="1" stroke-dasharray="3 3"/>
<line x1="662" y1="302.5" x2="1368" y2="302.5" stroke="#808080" stroke-width="1" stroke-dasharray="3 3"/>
<line x1="662" y1="299.5" x2="1368" y2="299.5" stroke="#808080" stroke-width="1" stroke-dasharray="3 3"/>
<line x1="662" y1="380.5" x2="1368" y2="380.5" stroke="#808080" stroke-width="1" stroke-dasharray="3 3"/>
<line x1="662" y1="372.5" x2="1368" y2="372.5" stroke="#808080" stroke-width="1" stroke-dasharray="3 3"/>
<line x1="662" y1="365.5" x2="1368" y2="365.5" stroke="#808080" stroke-width="1" stroke-dasharray="3 3"/>
<line x1="662" y1="361.5" x2="1368" y2="361.5" stroke="#808080" stroke-width="1" stroke-dasharray="3 3"/>
<line x1="662" y1="357.5" x2="1368" y2="357.5" stroke="#808080" stroke-width="1" stroke-dasharray="3 3"/>
<line x1="662" y1="354.5" x2="1368" y2="354.5" stroke="#808080" stroke-width="1" stroke-dasharray="3 3"/>
<line x1="662" y1="351.5" x2="1368" y2="351.5" stroke="#808080" stroke-width="1" stroke-dasharray="3 3"/>
<line x1="662" y1="348.5" x2="1368" y2="348.5" stroke="#808080" stroke-width="1" stroke-dasharray="3 3"/>
<line x1="662" y1="346.5" x2="1368" y2="346.5" stroke="#808080" stroke-width="1" stroke-dasharray="3 3"/>
<line x1="662" y1="429.5" x2="1368" y2="429.5" stroke="#808080" stroke-width="1" stroke-dasharray="3 3"/>
<line x1="662" y1="421.5" x2="1368" y2="421.5" stroke="#808080" stroke-width="1" stroke-dasharray="3 3"/>
<line x1="662" y1="414.5" x2="1368" y2="414.5" stroke="#808080" stroke-width="1" stroke-dasharray="3 3"/>
<line x1="662" y1="410.5" x2="1368" y2="410.5" stroke="#808080" stroke-width="1" stroke-dasharray="3 3"/>
<line x1="662" y1="406.5" x2="1368" y2="406.5" stroke="#808080" stroke-width="1" stroke-dasharray="3 3"/>
<line x1="662" y1="403.5" x2="1368" y2="403.5" stroke="#808080" stroke-width="1" stroke-dasharray="3 3"/>
<line x1="662" y1="400.5" x2="1368" y2="400.5" stroke="#808080" stroke-width="1" stroke-dasharray="3 3"/>
<line x1="662" y1="397.5" x2="1368" y2="397.5" stroke="#808080" stroke-width="1" stroke-dasharray="3 3"/>
<line x1="662" y1="395.5" x2="1368" y2="395.5" stroke="#808080" stroke-width="1" stroke-dasharray="3 3"/>
<line x1="740.5" y1="298" x2="740.5" y2="444" stroke="#808080" stroke-width="1" stroke-dasharray="3 3"/>
<line x1="818.5" y1="298" x2="818.5" y2="444" stroke="#808080" stroke-width="1" stroke-dasharray="3 3"/>
<line x1="897.5" y1="298" x2="897.5" y2="444" stroke="#808080" stroke-width="1" stroke-dasharray="3 3"/>
<line x1="975.5" y1="298" x2="975.5" y2="444" stroke="#808080" stroke-width="1" stroke-dasharray="3 3"/>
<line x1="1054.5" y1="298" x2="1054.5" y2="444" stroke="#808080" stroke-width="1" stroke-dasharray="3 3"/>
<line x1="1132.5" y1="298" x2="1132.5" y2="444" stroke="#808080" stroke-width="1" stroke-dasharray="3 3"/>
<line x1="1211.5" y1="298" x2="1211.5" y2="444" stroke="#808080" stroke-width="1" stroke-dasharray="3 3"/>
<line x1="1289.5" y1="298" x2="1289.5" y2="444" stroke="#808080" stroke-width="1" stroke-dasharray="3 3"/>
<rect x="661.5" y="297.5" width="707" height="147" fill="none" stroke="#808080" stroke-width="1"/>
<text x="623.5" y="301" fill="#0000ff" font-size="10.8" text-anchor="start" >1000m</text>
<text x="623.5" y="350" fill="#0000ff" font-size="10.8" text-anchor="start" >100m</text>
<text x="623.5" y="399" fill="#0000ff" font-size="10.8" text-anchor="start" >10m</text>
<text x="623.5" y="448" fill="#0000ff" font-size="10.8" text-anchor="start" >1m</text>
<text x="661" y="455" fill="#0000ff" font-size="10.8" text-anchor="start" >1.000K</text>
<text x="740.0555555555555" y="455" fill="#0000ff" font-size="10.8" text-anchor="middle" >2.000K</text>
<text x="818.6111111111111" y="455" fill="#0000ff" font-size="10.8" text-anchor="middle" >3.000K</text>
<text x="897.1666666666666" y="455" fill="#0000ff" font-size="10.8" text-anchor="middle" >4.000K</text>
<text x="975.7222222222222" y="455" fill="#0000ff" font-size="10.8" text-anchor="middle" >5.000K</text>
<text x="1054.2777777777778" y="455" fill="#0000ff" font-size="10.8" text-anchor="middle" >6.000K</text>
<text x="1132.8333333333333" y="455" fill="#0000ff" font-size="10.8" text-anchor="middle" >7.000K</text>
<text x="1211.388888888889" y="455" fill="#0000ff" font-size="10.8" text-anchor="middle" >8.000K</text>
<text x="1289.9444444444443" y="455" fill="#0000ff" font-size="10.8" text-anchor="middle" >9.000K</text>
<text x="1368.5" y="455" fill="#0000ff" font-size="10.8" text-anchor="middle" >10.000K</text>
<text x="661.5" y="468" fill="#ff0000" font-size="11" text-anchor="start" textLength="123.5" lengthAdjust="spacingAndGlyphs">IHD(HARM(V(A)),1000) (%)</text>
<text x="964" y="480.5" fill="#0000ff" font-size="11" text-anchor="middle" >F (Hz)</text>
<rect x="927" y="301" width="197" height="15" fill="#fff"/>
<text x="928" y="311" fill="#0000ff" font-size="11" text-anchor="start" >Percent Distortion of V(A) vs Frequency</text>
<rect x="740" y="306" width="1" height="138" fill="#ff0000"/>
<rect x="738" y="303" width="6" height="6" fill="#ff0000"/>
<rect x="818" y="368" width="1" height="76" fill="#ff0000"/>
<rect x="816" y="365" width="6" height="6" fill="#ff0000"/>
<rect x="975" y="417" width="1" height="27" fill="#ff0000"/>
<rect x="973" y="414" width="6" height="6" fill="#ff0000"/>
<rect x="1132" y="421" width="1" height="23" fill="#ff0000"/>
<rect x="1130" y="418" width="6" height="6" fill="#ff0000"/>
<rect x="1289" y="433" width="1" height="11" fill="#ff0000"/>
<rect x="1287" y="430" width="6" height="6" fill="#ff0000"/>
<rect x="895" y="441" width="6" height="4" fill="#ff0000"/>
<rect x="1052" y="439" width="6" height="6" fill="#ff0000"/>
<rect x="1209" y="439" width="6" height="6" fill="#ff0000"/>
<rect x="1366" y="438" width="3" height="7" fill="#ff0000"/>
<line x1="802.5" y1="492" x2="802.5" y2="638" stroke="#808080" stroke-width="1" stroke-dasharray="3 3"/>
<line x1="944.5" y1="492" x2="944.5" y2="638" stroke="#808080" stroke-width="1" stroke-dasharray="3 3"/>
<line x1="1085.5" y1="492" x2="1085.5" y2="638" stroke="#808080" stroke-width="1" stroke-dasharray="3 3"/>
<line x1="1227.5" y1="492" x2="1227.5" y2="638" stroke="#808080" stroke-width="1" stroke-dasharray="3 3"/>
<line x1="662" y1="520.5" x2="1368" y2="520.5" stroke="#808080" stroke-width="1" stroke-dasharray="3 3"/>
<line x1="662" y1="550.5" x2="1368" y2="550.5" stroke="#808080" stroke-width="1" stroke-dasharray="3 3"/>
<line x1="662" y1="579.5" x2="1368" y2="579.5" stroke="#808080" stroke-width="1" stroke-dasharray="3 3"/>
<line x1="662" y1="609.5" x2="1368" y2="609.5" stroke="#808080" stroke-width="1" stroke-dasharray="3 3"/>
<rect x="661.5" y="491.5" width="707" height="147" fill="none" stroke="#808080" stroke-width="1"/>
<text x="658.5" y="495" fill="#0000ff" font-size="10.8" text-anchor="end" >2.250</text>
<text x="658.5" y="524" fill="#0000ff" font-size="10.8" text-anchor="end" >1.500</text>
<text x="658.5" y="554" fill="#0000ff" font-size="10.8" text-anchor="end" >0.750</text>
<text x="658.5" y="583" fill="#0000ff" font-size="10.8" text-anchor="end" >0.000</text>
<text x="658.5" y="613" fill="#0000ff" font-size="10.8" text-anchor="end" >-0.750</text>
<text x="658.5" y="642" fill="#0000ff" font-size="10.8" text-anchor="end" >-1.500</text>
<text x="661" y="649" fill="#0000ff" font-size="10.8" text-anchor="start" >0.000m</text>
<text x="802.9" y="649" fill="#0000ff" font-size="10.8" text-anchor="middle" >1.000m</text>
<text x="944.3" y="649" fill="#0000ff" font-size="10.8" text-anchor="middle" >2.000m</text>
<text x="1085.7" y="649" fill="#0000ff" font-size="10.8" text-anchor="middle" >3.000m</text>
<text x="1227.1" y="649" fill="#0000ff" font-size="10.8" text-anchor="middle" >4.000m</text>
<text x="1368.5" y="649" fill="#0000ff" font-size="10.8" text-anchor="middle" >5.000m</text>
<text x="661" y="662" fill="#ff00ff" font-size="11" text-anchor="start" textLength="36.5" lengthAdjust="spacingAndGlyphs">V(A) (V)</text>
<text x="964" y="674.5" fill="#0000ff" font-size="11" text-anchor="middle" >T (Secs)</text>
<rect x="946" y="495" width="153" height="15" fill="#fff"/>
<text x="947" y="505" fill="#0000ff" font-size="11" text-anchor="start" xml:space="preserve" textLength="150" lengthAdjust="spacingAndGlyphs">Sampled Waveform  V(A) vs T</text>
<polyline points="1226.60,579.30 1228.37,583.22 1230.13,587.12 1231.90,590.97 1233.67,594.75 1235.44,598.43 1237.20,602.00 1238.97,605.42 1240.74,608.69 1242.51,611.77 1244.27,614.66 1246.04,617.32 1247.81,619.75 1249.58,621.93 1251.35,623.85 1253.11,625.49 1254.88,626.85 1256.65,627.92 1258.41,628.68 1260.18,629.15 1261.95,629.30 1263.72,629.15 1265.48,628.68 1267.25,627.92 1269.02,626.85 1270.79,625.49 1272.55,623.85 1274.32,621.93 1276.09,619.75 1277.86,617.32 1279.62,614.66 1281.39,611.77 1283.16,608.69 1284.93,605.42 1286.69,602.00 1288.46,598.43 1290.23,594.75 1292.00,590.97 1293.76,587.12 1295.53,583.22 1297.30,579.30 1299.07,575.56 1300.84,571.84 1302.60,568.16 1304.37,564.56 1306.14,561.05 1307.90,557.64 1309.67,554.38 1311.44,551.26 1313.21,548.32 1314.97,545.57 1316.74,543.03 1318.51,540.71 1320.28,538.63 1322.05,536.80 1323.81,535.23 1325.58,533.93 1327.35,532.92 1329.12,532.19 1330.88,531.75 1332.65,531.60 1334.42,531.75 1336.18,532.19 1337.95,532.92 1339.72,533.93 1341.49,535.23 1343.25,536.80 1345.02,538.63 1346.79,540.71 1348.56,543.03 1350.33,545.57 1352.09,548.32 1353.86,551.26 1355.63,554.38 1357.39,557.64 1359.16,561.05 1360.93,564.56 1362.70,568.16 1364.46,571.84 1366.23,575.56 1368.00,579.30" fill="none" stroke="#ff00ff" stroke-width="1.15" shape-rendering="auto"/>
</g></svg>
</body></html>
